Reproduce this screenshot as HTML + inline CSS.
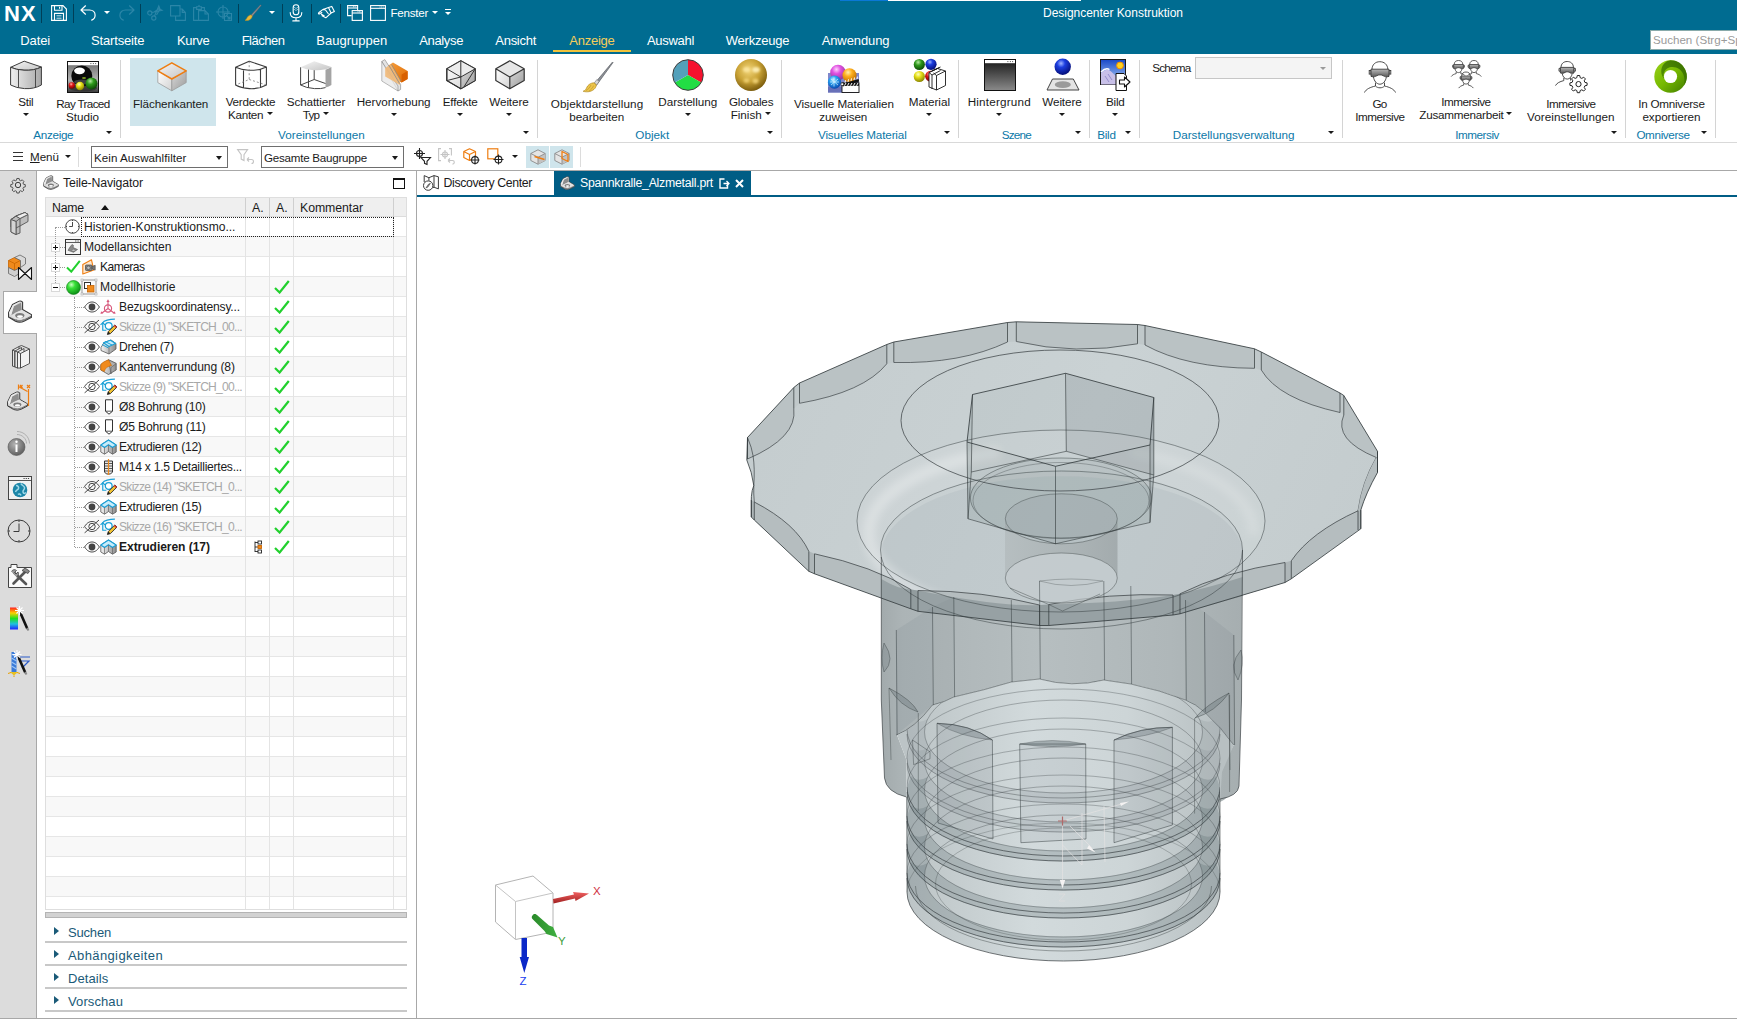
<!DOCTYPE html>
<html lang="de">
<head>
<meta charset="utf-8">
<title>NX - Designcenter Konstruktion</title>
<style>
*{box-sizing:border-box;margin:0;padding:0}
html,body{width:1737px;height:1022px;overflow:hidden;background:#fff}
body{font-family:"Liberation Sans",sans-serif;font-size:12px;color:#1a1a1a;position:relative}
svg{position:absolute;overflow:visible}
.abs{position:absolute}
#hdr{position:absolute;left:0;top:0;width:1737px;height:54px;background:#006c91}
#hdr .t{position:absolute;color:#fff;white-space:nowrap}
.qs{position:absolute;top:4px;width:1px;height:19px;background:#003f57}
.mt{position:absolute;top:33px;font-size:13px;color:#fff;white-space:nowrap;line-height:15px}
#ribbon{position:absolute;left:0;top:54px;width:1737px;height:88px;background:#fff}
#ribline{position:absolute;left:0;top:142px;width:1737px;height:1px;background:#d9d9d9}
.rl{position:absolute;font-size:11.6px;line-height:13px;text-align:center;white-space:nowrap;color:#1a1a1a;transform:translateX(-50%)}
.gl{position:absolute;top:128px;font-size:11.6px;line-height:13px;color:#0b78a8;white-space:nowrap;transform:translateX(-50%)}
.vsep{position:absolute;width:1px;background:#d4d4d4;top:60px;height:78px}
.dd{position:absolute;width:0;height:0;border-left:3px solid transparent;border-right:3px solid transparent;border-top:3.5px solid #1a1a1a}
.ddw{border-top-color:#fff}
#selbar{position:absolute;left:0;top:143px;width:1737px;height:27px;background:#fff}
#selline{position:absolute;left:0;top:170px;width:1737px;height:1px;background:#a8a8a8}
.combo{position:absolute;top:146px;height:22px;border:1px solid #6e6e6e;background:#fff;font-size:12px;line-height:20px;padding-left:2px;white-space:nowrap}
#side{position:absolute;left:0;top:171px;width:37px;height:847px;background:#dcdcdc;border-right:1px solid #a8a8a8}
#nav{position:absolute;left:37px;top:171px;width:379px;height:847px;background:#fff}
#vdiv{position:absolute;left:416px;top:171px;width:1px;height:847px;background:#a8a8a8}
#botline{position:absolute;left:0;top:1018px;width:1737px;height:1px;background:#a8a8a8}
#tabs{position:absolute;left:418px;top:171px;width:1319px;height:26px;background:#fff}
#view{position:absolute;left:418px;top:197px;width:1319px;height:821px;background:#fff}
</style>
</head>
<body>
<div id="hdr">
<div class="abs" style="left:840px;top:0;width:48px;height:1px;background:#0a78d6"></div>
<div class="abs" style="left:888px;top:0;width:193px;height:1px;background:#fff"></div>
<div class="t" style="left:4px;top:0px;font-size:22px;font-weight:bold;line-height:27px;letter-spacing:1.219px;">NX</div>
<div class="qs" style="left:41px"></div><div class="qs" style="left:73px"></div><div class="qs" style="left:140px"></div><div class="qs" style="left:238px"></div><div class="qs" style="left:282px"></div><div class="qs" style="left:311px"></div><div class="qs" style="left:340px"></div>
<svg style="left:51px;top:5px" width="16" height="16" viewBox="0 0 16 16" fill="none" stroke="#fff" stroke-width="1.1"><path d="M0.6 0.6h11.4l3.4 3.4v11.4h-14.8z"/><path d="M3.5 0.6v4.6h7.5v-4.6M8.6 1.8v2"/><path d="M3.500 15.400v-7h9v7"/><path d="M5.500 10.800h5M5.500 13.200h5" stroke-width="0.8"/></svg>
<svg style="left:80px;top:5px" width="17" height="16" viewBox="0 0 17 16" fill="none" stroke="#fff" stroke-width="1.2" stroke-linecap="round" stroke-linejoin="round"><path d="M5.5 0.8L1 5l4.5 4.2M1 5h8.5c3.4 0 5.6 2.3 5.6 5.2c0 2.200 -1.400 4.100 -3.400 4.900"/></svg>
<svg style="left:118px;top:5px" width="17" height="16" viewBox="0 0 17 16" fill="none" stroke="#2b86a8" stroke-width="1.2" stroke-linecap="round" stroke-linejoin="round"><path d="M11.5 0.8L16 5l-4.500 4.200M16 5h-8.500c-3.400 0 -5.600 2.300 -5.600 5.200c0 2.200 1.400 4.100 3.400 4.900"/></svg>
<svg style="left:147px;top:5px" width="16" height="16" viewBox="0 0 16 16" fill="none" stroke="#2b86a8" stroke-width="1.1"><circle cx="2.8" cy="8" r="2.1"/><circle cx="6.800" cy="13" r="2.100"/><path d="M4.800 7.500L15 5.200l-3 -1.500l-5.500 3.700M7.500 11l4.300 -10l1.200 3l-3.500 6"/></svg>
<svg style="left:170px;top:5px" width="16" height="16" viewBox="0 0 16 16" fill="none" stroke="#2b86a8" stroke-width="1.1"><path d="M0.600 0.600h9.400v10.400h-9.400z"/><path d="M5.600 11v4.400h9.800v-8l-3.200 -3.400h-2.200M12.200 4v3.400h3.200"/></svg>
<svg style="left:193px;top:5px" width="16" height="16" viewBox="0 0 16 16" fill="none" stroke="#2b86a8" stroke-width="1.1"><path d="M3.600 2.600h-3v12.800h5M8.400 2.600h3v3M3.600 4.400v-2.600h1.400l1 -1.200l1 1.200h1.400v2.600z"/><path d="M5.600 5.600h6.400l3.400 3.400v6.400h-9.800zM12 5.600v3.400h3.400"/></svg>
<svg style="left:216px;top:5px" width="16" height="16" viewBox="0 0 16 16" fill="none" stroke="#2b86a8" stroke-width="1.1"><circle cx="7" cy="7" r="5"/><path d="M7 0v14M0 7h14M8.500 8.500h7v7h-7zM10.500 10.500l3.500 3.500M14 11.500v2.500h-2.500"/></svg>
<svg style="left:244px;top:4px" width="18" height="18" viewBox="0 0 18 18"><path d="M16.500 0.800L6.800 11.200l1.400 1.200L17.200 1.500z" fill="#8a8e94" stroke="#5a5e64" stroke-width="0.5"/><path d="M6.600 10.900c-1.800 0.200 -3.200 1.800 -3.800 3.400c-0.400 1 -1 1.700 -1.800 2c2.400 0.700 5.400 -0.400 6.600 -2.400c0.500 -0.900 0.600 -1.700 0.500 -2.200z" fill="#e8b93a" stroke="#b98a1c" stroke-width="0.5"/></svg>
<svg style="left:289px;top:4px" width="14" height="18" viewBox="0 0 14 18" fill="none" stroke="#fff" stroke-width="1.1" stroke-linecap="round"><rect x="4.200" y="0.800" width="5.600" height="10" rx="2.800"/><path d="M1.200 8.500c0 3.300 2.500 5.300 5.800 5.300s5.800 -2 5.800 -5.300M7 13.800v3M3.800 16.900h6.400"/><path d="M5.800 3.500h0.010M8.200 3.500h0.010M5.800 5.500h0.010M8.200 5.500h0.010M7 4.500h0.010M7 6.500h0.010" stroke-width="0.9"/></svg>
<svg style="left:317px;top:6px" width="18" height="13" viewBox="0 0 18 13" fill="none" stroke="#fff" stroke-width="1.1" stroke-linejoin="round"><path d="M11.500 1.600l3.300 -1.200l2.600 5l-3.300 1.600z"/><path d="M11.500 1.600l-5.500 1.800l-4.300 3.400c-0.700 0.600 0.200 1.600 1 1l2.500 -1.600M14.100 7l-5.300 4.800l-4.200 -2.200M6 3.400l2.500 0.600l3 4M4 8l3.500 2"/></svg>
<svg style="left:347px;top:5px" width="16" height="16" viewBox="0 0 16 16" fill="none" stroke="#fff" stroke-width="1.1"><path d="M4.600 10.600h-4v-10h10v4.500"/><path d="M0.600 3h10"/><rect x="5.200" y="5.600" width="10.200" height="9.800"/><path d="M5.200 8h10.200"/><path d="M6 1.800h3M10.500 6.800h3.500" stroke-dasharray="1 0.600" stroke-width="0.8"/></svg>
<svg style="left:370px;top:5px" width="16" height="16" viewBox="0 0 16 16" fill="none" stroke="#fff" stroke-width="1.1"><rect x="0.600" y="0.600" width="14.800" height="14.800"/><path d="M0.600 3.300h14.800"/><path d="M9.500 2h4.200" stroke-dasharray="1 0.600" stroke-width="0.800"/></svg>

<div class="t" style="left:390.5px;top:6px;font-size:11.6px;line-height:14px;letter-spacing:-0.261px;">Fenster</div>
<div class="dd ddw" style="left:432px;top:11px"></div>
<div class="dd ddw" style="left:445px;top:12px"></div><div class="abs" style="left:445px;top:9px;width:6px;height:1px;background:#fff"></div>
<div class="dd ddw" style="left:104px;top:11px"></div>
<div class="dd ddw" style="left:269px;top:11px"></div>
<div class="t" style="left:1043px;top:6px;font-size:12px;line-height:14px;letter-spacing:-0.030px;">Designcenter Konstruktion</div>
<div class="mt" style="left:20.3px;font-size:13px;letter-spacing:-0.130px;">Datei</div>
<div class="mt" style="left:91px;font-size:13px;letter-spacing:-0.161px;">Startseite</div>
<div class="mt" style="left:177px;font-size:13px;letter-spacing:-0.332px;">Kurve</div>
<div class="mt" style="left:241.7px;font-size:13px;letter-spacing:-0.507px;">Flächen</div>
<div class="mt" style="left:316.3px;font-size:13px;letter-spacing:0.016px;">Baugruppen</div>
<div class="mt" style="left:419.3px;font-size:13px;letter-spacing:-0.364px;">Analyse</div>
<div class="mt" style="left:495.3px;font-size:13px;letter-spacing:-0.276px;">Ansicht</div>
<div class="mt" style="left:569.3px;font-size:13px;letter-spacing:-0.240px;;color:#f5cd5a">Anzeige</div>
<div class="mt" style="left:647px;font-size:13px;letter-spacing:-0.306px;">Auswahl</div>
<div class="mt" style="left:725.7px;font-size:13px;letter-spacing:-0.202px;">Werkzeuge</div>
<div class="mt" style="left:821.7px;font-size:13px;letter-spacing:-0.108px;">Anwendung</div>
<div class="abs" style="left:553px;top:50px;width:78px;height:2px;background:#f0c23c"></div>
<div class="abs" style="left:1650px;top:30px;width:90px;height:20px;background:#fff;border:1px solid #8aa;color:#9a9a9a;font-size:11.6px;line-height:18px;padding-left:2px;white-space:nowrap;overflow:hidden">Suchen (Strg+Sp</div>
</div>
<div id="ribbon"></div>
<div id="ribline"></div>
<div class="abs" style="left:130px;top:58px;width:86px;height:68px;background:#cfe5ec"></div>
<svg width="0" height="0" style="left:0;top:0"><defs>
<filter id="fB1" x="-50%" y="-50%" width="200%" height="200%"><feGaussianBlur stdDeviation="1.1"/></filter><filter id="fB2" x="-50%" y="-50%" width="200%" height="200%"><feGaussianBlur stdDeviation="0.7"/></filter><linearGradient id="gSide" x1="0" x2="1" y1="0" y2="0"><stop offset="0" stop-color="#f0f0f0"/><stop offset="1" stop-color="#a8a8a8"/></linearGradient>
<linearGradient id="gTop" x1="0" x2="1" y1="0" y2="1"><stop offset="0" stop-color="#f6f6f6"/><stop offset="1" stop-color="#c4c4c4"/></linearGradient>
<linearGradient id="gL" x1="0" x2="1" y1="0" y2="1"><stop offset="0" stop-color="#ffffff"/><stop offset="1" stop-color="#d2d2d2"/></linearGradient>
<linearGradient id="gR" x1="0" x2="1" y1="0" y2="1"><stop offset="0" stop-color="#d8d8d8"/><stop offset="1" stop-color="#9c9c9c"/></linearGradient>
<radialGradient id="gGold" cx="0.42" cy="0.35" r="0.65"><stop offset="0" stop-color="#f3d67a"/><stop offset="0.55" stop-color="#c9a235"/><stop offset="1" stop-color="#7d5e0e"/></radialGradient>
<radialGradient id="gBlue" cx="0.4" cy="0.3" r="0.7"><stop offset="0" stop-color="#9fb4ff"/><stop offset="0.35" stop-color="#1c3ee0"/><stop offset="1" stop-color="#050f7a"/></radialGradient>
<radialGradient id="gGreen" cx="0.4" cy="0.3" r="0.7"><stop offset="0" stop-color="#b4e8a0"/><stop offset="0.4" stop-color="#2f9a1c"/><stop offset="1" stop-color="#0d4a06"/></radialGradient>
<radialGradient id="gYel" cx="0.4" cy="0.3" r="0.7"><stop offset="0" stop-color="#ffffc0"/><stop offset="0.4" stop-color="#e6e018"/><stop offset="1" stop-color="#8a8400"/></radialGradient>
<radialGradient id="gRed" cx="0.4" cy="0.3" r="0.7"><stop offset="0" stop-color="#ffb0a8"/><stop offset="0.4" stop-color="#e01818"/><stop offset="1" stop-color="#700"/></radialGradient>
<radialGradient id="gMag" cx="0.4" cy="0.3" r="0.7"><stop offset="0" stop-color="#ffd0ff"/><stop offset="0.4" stop-color="#e050e0"/><stop offset="1" stop-color="#903a98"/></radialGradient>
<radialGradient id="gOra" cx="0.4" cy="0.3" r="0.7"><stop offset="0" stop-color="#fff0b0"/><stop offset="0.4" stop-color="#ffb020"/><stop offset="1" stop-color="#c07000"/></radialGradient>
<radialGradient id="gCy" cx="0.4" cy="0.3" r="0.7"><stop offset="0" stop-color="#c0f0ff"/><stop offset="0.4" stop-color="#28a0f0"/><stop offset="1" stop-color="#0a4ab0"/></radialGradient>
<linearGradient id="gBlk" x1="0" x2="0" y1="0" y2="1"><stop offset="0" stop-color="#161616"/><stop offset="1" stop-color="#8a8a8a"/></linearGradient>
<linearGradient id="gRay" x1="0" x2="0" y1="0" y2="1"><stop offset="0" stop-color="#6a6a6a"/><stop offset="0.6" stop-color="#b4b4b4"/><stop offset="1" stop-color="#3a3a3a"/></linearGradient>
<linearGradient id="gVr" x1="0" x2="0" y1="0" y2="1"><stop offset="0" stop-color="#b8b8b8"/><stop offset="1" stop-color="#5a5a5a"/></linearGradient>
<linearGradient id="gOmni" x1="0" x2="1" y1="0" y2="1"><stop offset="0" stop-color="#9ad21a"/><stop offset="0.5" stop-color="#76b900"/><stop offset="1" stop-color="#3f7a00"/></linearGradient>
<linearGradient id="gOmni2" x1="0" x2="1" y1="1" y2="0"><stop offset="0" stop-color="#4e8c00"/><stop offset="1" stop-color="#2f6400"/></linearGradient>
<linearGradient id="gOr" x1="0" x2="1" y1="0" y2="1"><stop offset="0" stop-color="#f6a040"/><stop offset="1" stop-color="#e06a00"/></linearGradient>
<linearGradient id="gSky" x1="0" x2="0" y1="0" y2="1"><stop offset="0" stop-color="#1848c8"/><stop offset="1" stop-color="#b8d8f8"/></linearGradient>
</defs></svg>
<!-- Stil -->
<svg style="left:10px;top:60px" width="32" height="30" viewBox="0 0 32 30"><path d="M0.600 7.300L14.200 1.200L31.400 7Q24 10.800 14 10.200Q6 9.800 0.600 7.300z" fill="url(#gTop)" stroke="#3c3c3c" stroke-width="1" stroke-linejoin="round"/><path d="M0.600 7.300Q6 9.800 14 10.200Q24 10.800 31.400 7V25Q24 29.200 14.500 28.600Q6 28 0.600 25z" fill="url(#gSide)" stroke="#3c3c3c" stroke-width="1" stroke-linejoin="round"/><path d="M8.500 9.600V27.400M25.500 9.800V27.600" stroke="#3c3c3c" stroke-width="0.9" fill="none"/></svg>
<!-- Ray traced -->
<svg style="left:67px;top:61px" width="32" height="32" viewBox="0 0 32 32"><rect x="0.500" y="0.500" width="31" height="31" fill="url(#gRay)" stroke="#111" stroke-width="1"/><rect x="1" y="1" width="30" height="3.200" fill="#fff"/><path d="M23.500 2.600h0.800M25.900 2.600h0.800M28.300 2.600h0.800" stroke="#111" stroke-width="0.9"/><ellipse cx="16" cy="27" rx="14" ry="3.500" fill="#2a2a2a" opacity="0.7"/><circle cx="14.800" cy="15" r="10.500" fill="#0a0a0a"/><ellipse cx="12.500" cy="9.800" rx="5.400" ry="3.400" fill="#fff" filter="url(#fB2)"/><ellipse cx="11" cy="9.500" rx="3" ry="2" fill="#fff"/><ellipse cx="15" cy="21" rx="8" ry="2.500" fill="#555" opacity="0.7"/><circle cx="24.500" cy="22.500" r="6" fill="url(#gGreen)"/><circle cx="13" cy="25" r="4.200" fill="url(#gYel)"/><circle cx="4.800" cy="24.500" r="3.200" fill="url(#gRed)"/><ellipse cx="17" cy="17" rx="2" ry="1" fill="#7a9a20"/></svg>
<!-- Flaechenkanten -->
<svg style="left:157px;top:62px" width="30" height="30" viewBox="0 0 30 30"><path d="M0.800 8.800L14.800 17V28.800L0.800 20.600z" fill="url(#gL)" stroke="#9a9a9a" stroke-width="0.8"/><path d="M29.200 8.800L14.800 17V28.800L29.200 20.600z" fill="url(#gR)" stroke="#9a9a9a" stroke-width="0.800"/><path d="M14.800 0.800L29.200 8.800L14.800 17L0.800 8.800z" fill="url(#gTop)" stroke="#ee7d11" stroke-width="1.500" stroke-linejoin="round"/></svg>
<!-- Verdeckte Kanten -->
<svg style="left:235px;top:60px" width="32" height="30" viewBox="0 0 32 30" fill="none" stroke="#3c3c3c" stroke-linejoin="round"><path d="M0.600 7.300L14.200 1.200L31.400 7Q24 10.800 14 10.200Q6 9.800 0.600 7.300zM0.600 7.300V25Q6 28 14.500 28.600Q24 29.200 31.400 25V7M8.500 9.600V27.400M25.500 9.800V27.600" stroke-width="1.100"/><path d="M14.200 1.200V19.500L0.600 25M14.200 19.500L31.400 25" stroke-width="0.8" stroke-dasharray="2 2" stroke="#7a7a7a"/></svg>
<!-- Schattierter Typ -->
<svg style="left:300px;top:60px" width="32" height="30" viewBox="0 0 32 30" stroke-linejoin="round"><path d="M0.600 7.300L14.200 1.200L31.400 7Q24 10.800 14 10.200Q6 9.800 0.600 7.300z" fill="url(#gTop)" stroke="none"/><path d="M25.500 9.800Q29 8.600 31.400 7V25Q29 26.600 25.500 27.600z" fill="#a4a4a4"/><path d="M0.600 7.300V25Q6 28 14.500 28.600Q21 29 25.500 27.600M8.500 9.600V27.400M14.200 10.200V19.500L0.600 25M14.200 19.500L25.500 23.500" fill="none" stroke="#444" stroke-width="1"/></svg>
<!-- Hervorhebung -->
<svg style="left:381px;top:58px" width="28" height="33" viewBox="0 0 28 33"><path d="M6 8.500l6 -4l14.600 8.500v8l-6 3.500l-14.600 -8.500z" fill="url(#gOr)"/><path d="M20.600 16.500l6 -3.500v8l-6 3.500z" fill="#d86000"/><path d="M0.800 3.500L3.800 1.600L19.600 26.500V31.500L17 33z" fill="#e0e0e0" stroke="#8a8a8a" stroke-width="0.8" opacity="0.85"/><path d="M0.800 3.500V23L17 33V28z" fill="#e8e8e8" stroke="#8a8a8a" stroke-width="0.800" opacity="0.75"/><path d="M4.200 10L10 6.500L19 21.500V27L4.200 18.500z" fill="#f0b878" opacity="0.9"/><path d="M8 7.500L18.500 25.500M10.500 6.500L20 23" stroke="#8a8a8a" stroke-width="0.800" fill="none"/></svg>
<!-- Effekte -->
<svg style="left:446px;top:60px" width="30" height="30" viewBox="0 0 30 30" stroke-linejoin="round"><path d="M14.800 0.800L29.200 8.800V20.600L14.800 28.800L0.800 20.600V8.800z" fill="url(#gL)" stroke="#333" stroke-width="1.200"/><path d="M14.800 17L29.200 8.800V20.600L14.800 28.800z" fill="url(#gR)"/><path d="M14.800 0.800L29.200 8.800L14.800 17L0.800 8.800z" fill="#ececec"/><path d="M14.800 0.800L29.200 8.800V20.600L14.800 28.800L0.800 20.600V8.800zM0.800 8.800L14.800 17L29.200 8.800M14.800 17V28.800M14.800 0.800V17M0.800 20.600L14.800 17M29.200 8.800L18 26.800" fill="none" stroke="#333" stroke-width="1"/></svg>
<!-- Weitere -->
<svg style="left:495px;top:60px" width="30" height="30" viewBox="0 0 30 30" stroke-linejoin="round"><path d="M0.800 8.800L14.800 17V28.800L0.800 20.600z" fill="url(#gL)"/><path d="M29.200 8.800L14.800 17V28.800L29.200 20.600z" fill="url(#gR)"/><path d="M14.800 0.800L29.200 8.800L14.800 17L0.800 8.800z" fill="#e6e6e6"/><path d="M14.800 0.800L29.200 8.800V20.600L14.800 28.800L0.800 20.600V8.800zM0.800 8.800L14.800 17L29.200 8.800M14.800 17V28.800" fill="none" stroke="#333" stroke-width="1.200"/></svg>
<!-- Objektdarstellung brush -->
<svg style="left:582px;top:61px" width="32" height="32" viewBox="0 0 32 32"><path d="M30.500 1L12.500 22.500L14.500 24.200L31 1.600z" fill="#8e9298" stroke="#4a4e54" stroke-width="0.6"/><path d="M14.800 18.500l2.400 2l-2.600 3.600l-2.400 -2z" fill="#d6d6d6" stroke="#6a6a6a" stroke-width="0.5"/><path d="M12 21.800c-3.500 0 -6.500 2.400 -7.500 5.200c-0.600 1.700 -1.800 2.800 -3.400 3.200c4 1.600 9.600 0.200 12 -3c1.100 -1.500 1.400 -2.900 1 -3.700z" fill="#ecc44a" stroke="#a8821c" stroke-width="0.600"/><path d="M4 29.500c2 -1 4 -3 5 -5.500M7 30c2 -1.200 3.600 -3 4.600 -5.400" stroke="#b8902a" stroke-width="0.600" fill="none"/></svg>
<!-- Darstellung pie -->
<svg style="left:672px;top:59px" width="32" height="32" viewBox="0 0 32 32"><path d="M16 16V0.800A15.200 15.200 0 0 1 29.160 23.600z" fill="#f5122e"/><path d="M16 16L29.160 23.600A15.200 15.200 0 0 1 2.840 23.600z" fill="#22dd44"/><path d="M16 16L2.840 23.600A15.200 15.200 0 0 1 16 0.800z" fill="#54a0ba"/><circle cx="16" cy="16" r="15.300" fill="none" stroke="#3a3a3a" stroke-width="1"/></svg>
<!-- Globales Finish -->
<svg style="left:735px;top:59px" width="32" height="32" viewBox="0 0 32 32"><circle cx="16" cy="16" r="16" fill="url(#gGold)"/><g filter="url(#fB1)"><ellipse cx="11.500" cy="10.500" rx="3.400" ry="2.600" fill="#fbe6a0" opacity="0.9"/><ellipse cx="21" cy="10.800" rx="3.800" ry="2.800" fill="#fdeeb4" opacity="0.95"/><ellipse cx="11.500" cy="21.500" rx="2.800" ry="2.200" fill="#f3d67a" opacity="0.8"/><ellipse cx="20.500" cy="22" rx="3" ry="2.400" fill="#f3d67a" opacity="0.85"/></g></svg>
<!-- Visuelle Materialien -->
<svg style="left:827px;top:63px" width="34" height="31" viewBox="0 0 34 31"><rect x="1" y="10" width="31" height="19.500" fill="#8088cc"/><rect x="1" y="24" width="31" height="5.500" fill="#6870b8"/><circle cx="11" cy="9.500" r="7.800" fill="url(#gMag)"/><circle cx="22.500" cy="12.200" r="7" fill="url(#gOra)"/><circle cx="7.500" cy="19.200" r="6.600" fill="url(#gCy)"/><path d="M7 14.500v9M3 19h9M4 16l7 6M11 16l-7 6" stroke="#d8f4ff" stroke-width="0.7"/><rect x="15" y="19.800" width="17" height="9.700" fill="#fff" stroke="#111" stroke-width="0.9"/><path d="M15 21l16.500 -5l0.800 2.600l-16.500 5z" fill="#111"/><path d="M15 19.800h17v3h-17z" fill="#111"/><path d="M17.500 22.600l1.500 -2.600M20.500 22.600l1.500 -2.600M23.500 22.600l1.500 -2.600M26.500 22.600l1.500 -2.600M29.500 22.600l1.500 -2.600M18 19.800l0.500 -2.600M21 18.900l0.500 -2.600M24 18l0.500 -2.600M27 17.100l0.500 -2.600M30 16.200l0.500 -2.600" stroke="#fff" stroke-width="1"/><circle cx="15.200" cy="21.200" r="1.400" fill="#fff" stroke="#111" stroke-width="0.600"/></svg>
<!-- Material -->
<svg style="left:913px;top:58px" width="34" height="33" viewBox="0 0 34 33"><circle cx="6.300" cy="6.500" r="5.600" fill="url(#gGreen)"/><circle cx="18" cy="6.300" r="5.600" fill="url(#gBlue)"/><circle cx="6.300" cy="18.500" r="5.600" fill="url(#gYel)"/><circle cx="17.500" cy="18.200" r="5.400" fill="url(#gRed)"/><path d="M16 14.500L24.500 10.500L32.500 13V27.500L23.500 32L16 29z" fill="#fff" stroke="#1a1a1a" stroke-width="0.9" stroke-linejoin="round"/><path d="M16 14.500L19 17V31M19 17L27.500 12.500M20.500 15L23.500 17.500V32M23.500 17.500L32.500 13M17.500 13.800L26 9.800M19 12.800L27.500 9" fill="none" stroke="#1a1a1a" stroke-width="0.900" stroke-linejoin="round"/></svg>
<!-- Hintergrund -->
<svg style="left:984px;top:59px" width="32" height="32" viewBox="0 0 32 32"><rect x="0.500" y="0.500" width="31" height="31" fill="url(#gBlk)" stroke="#111" stroke-width="1"/><rect x="1" y="1" width="30" height="3.200" fill="#fff"/><path d="M23.500 2.600h0.800M25.900 2.600h0.800M28.300 2.600h0.800" stroke="#111" stroke-width="0.900"/></svg>
<!-- Weitere Szene -->
<svg style="left:1046px;top:58px" width="34" height="33" viewBox="0 0 34 33"><circle cx="16.700" cy="8.700" r="8.200" fill="url(#gBlue)"/><path d="M6.500 21h20.800L33 32H1z" fill="#e4e4e4" stroke="#444" stroke-width="1"/><ellipse cx="16.800" cy="26.700" rx="8" ry="3.400" fill="#9a9a9a"/></svg>
<!-- Bild -->
<svg style="left:1100px;top:59px" width="32" height="32" viewBox="0 0 32 32"><rect x="0.500" y="0.500" width="25" height="25" fill="url(#gSky)" stroke="#1a1a1a" stroke-width="1"/><path d="M1 14c3 -3 6 -4 8 -3c3 1.500 5 5 7 6v8.500h-15z" fill="#c8c0e8"/><path d="M1 13c3 -3 6 -4 8.500 -2.500" fill="none" stroke="#fff" stroke-width="1.300"/><path d="M5 17l4 6M8 15l4 6" stroke="#9088c8" stroke-width="0.9"/><circle cx="20" cy="6.500" r="3.400" fill="#ffd21e" stroke="#f08c00" stroke-width="1"/><path d="M16 14.500h8l2.500 2.500v14.500h-10.500z" fill="#fff" stroke="#111" stroke-width="1"/><path d="M19.500 21h5v-3l5.500 5l-5.500 5v-3h-5z" fill="#fff" stroke="#111" stroke-width="1.100" stroke-linejoin="round"/></svg>
<!-- Go Immersive -->
<svg style="left:1364px;top:61px" width="32" height="32" viewBox="0 0 32 32" fill="none" stroke="#3a3a3a" stroke-width="0.9"><path d="M8 8.500c0 -5 3.500 -7.800 7.800 -7.800s8 2.800 8 7.800"/><path d="M9.500 16c0.500 4 3.300 7.200 6.400 7.200s5.900 -3.200 6.400 -7.200"/><path d="M11.500 21.500v3.500c-5 1.200 -9.500 3 -11 6.500M20.500 21.500v3.500c5 1.200 9.500 3 11 6.500M11.500 25c2 2.400 7 2.400 9 0"/><rect x="5.200" y="9.500" width="1.800" height="3.600" fill="#ddd"/><rect x="25" y="9.500" width="1.800" height="3.600" fill="#ddd"/><path d="M7 8.200h18v7.200c-2.500 0.800 -4.500 0.200 -6 -0.800c-1.800 -1 -4.200 -1 -6 0c-1.500 1 -3.500 1.600 -6 0.800z" fill="url(#gVr)"/></svg>
<!-- Immersive Zusammenarbeit -->
<svg style="left:1451px;top:60px" width="32" height="30" viewBox="0 0 32 30" fill="none" stroke="#3a3a3a" stroke-width="0.8"><g id="vrp"><path d="M3.200 4.500c0 -2.800 2 -4 4.300 -4s4.300 1.200 4.300 4"/><path d="M4 8.800c0.300 2.200 1.800 3.800 3.500 3.800s3.200 -1.600 3.500 -3.800"/><path d="M5.200 11.800v1.800c-2.400 0.600 -4 1.400 -5 3M9.800 11.800v1.800c2.400 0.600 4 1.400 5 3"/><path d="M2.600 4.500h9.800v4c-1.300 0.400 -2.400 0.100 -3.200 -0.400c-1 -0.600 -2.400 -0.600 -3.400 0c-0.800 0.500 -1.900 0.800 -3.200 0.400z" fill="url(#gVr)"/><path d="M1.600 5.300h1v2h-1zM12.400 5.300h1v2h-1z" fill="#ddd"/></g><use href="#vrp" x="15.500" y="0"/><g transform="translate(7.500,11.500)"><path d="M1.500 4h12v9h-12z" fill="#fff" stroke="none"/><use href="#vrp"/></g></svg>
<!-- Immersive Voreinstellungen -->
<svg style="left:1555px;top:61px" width="33" height="32" viewBox="0 0 33 32" fill="none" stroke="#3a3a3a" stroke-width="0.9"><path d="M6 6.500c0 -4 2.800 -6 6.200 -6s6.200 2 6.200 6"/><path d="M7.200 12.500c0.400 3.200 2.600 5.600 5 5.600s4.600 -2.400 5 -5.600"/><path d="M8.800 16.800v2.800c-4 1 -7 2.400 -8.300 5M15.600 16.800v2.800"/><path d="M5.400 6.400h13.600v5.600c-1.900 0.600 -3.400 0.200 -4.600 -0.600c-1.300 -0.800 -3.100 -0.800 -4.400 0c-1.200 0.800 -2.700 1.200 -4.600 0.600z" fill="url(#gVr)"/><path d="M4 7.400h1.400v2.800h-1.400zM19 7.400h1.400v2.800h-1.400z" fill="#ddd"/><circle cx="23.500" cy="23" r="6.800" fill="#fff" stroke="none"/><path d="M22.300 14.500h2.400l0.500 2.200l1.600 0.700l1.900 -1.200l1.700 1.700l-1.200 1.900l0.700 1.600l2.200 0.500v2.400l-2.200 0.500l-0.700 1.600l1.200 1.900l-1.700 1.700l-1.900 -1.200l-1.600 0.700l-0.500 2.200h-2.400l-0.500 -2.200l-1.600 -0.700l-1.900 1.200l-1.700 -1.700l1.200 -1.900l-0.700 -1.600l-2.200 -0.500v-2.400l2.200 -0.500l0.700 -1.600l-1.200 -1.900l1.700 -1.700l1.900 1.200l1.600 -0.700z" fill="#fff" stroke="#222" stroke-width="1"/><circle cx="23.500" cy="23.100" r="2.600" fill="#fff" stroke="#222" stroke-width="1"/></svg>
<!-- Omniverse -->
<svg style="left:1654px;top:60px" width="33" height="33" viewBox="0 0 33 33"><circle cx="16.500" cy="16.500" r="16.200" fill="url(#gOmni)"/><path d="M16.500 0.300a16.200 16.200 0 0 1 13 26c2 -6 1 -13 -4 -17c-4 -3 -9 -3 -12 -1c-4 2.500 -5 7.500 -3 11c-4 -4 -4.500 -11 -0.500 -15.500c1.800 -2 4 -3.200 6.500 -3.500z" fill="url(#gOmni2)" opacity="0.85"/><circle cx="16.500" cy="16.500" r="6.600" fill="#fff"/></svg>

<div class="dd" style="left:23px;top:113px"></div>

<div class="dd" style="left:106px;top:131px"></div>
<div class="vsep" style="left:120px"></div>

<div class="dd" style="left:267px;top:112px"></div>
<div class="dd" style="left:323px;top:112px"></div>
<div class="dd" style="left:391px;top:113px"></div>
<div class="dd" style="left:457px;top:113px"></div>
<div class="dd" style="left:506px;top:113px"></div>
<div class="dd" style="left:523px;top:131px"></div>
<div class="vsep" style="left:537px"></div>

<div class="dd" style="left:685px;top:113px"></div>
<div class="dd" style="left:765px;top:112px"></div>
<div class="dd" style="left:767px;top:131px"></div>
<div class="vsep" style="left:781px"></div>

<div class="dd" style="left:926px;top:113px"></div>
<div class="dd" style="left:944px;top:131px"></div>
<div class="vsep" style="left:958px"></div>
<div class="dd" style="left:996px;top:113px"></div>
<div class="dd" style="left:1059px;top:113px"></div>
<div class="dd" style="left:1075px;top:131px"></div>
<div class="vsep" style="left:1089px"></div>
<div class="dd" style="left:1112px;top:113px"></div>
<div class="dd" style="left:1125px;top:131px"></div>
<div class="vsep" style="left:1139px"></div>

<div class="abs" style="left:1195px;top:57px;width:137px;height:22px;border:1px solid #c6c6c6;background:#f4f4f4"></div>
<div class="dd" style="left:1320px;top:67px;border-top-color:#9a9a9a"></div>
<div class="dd" style="left:1328px;top:131px"></div>
<div class="vsep" style="left:1342px"></div>

<div class="dd" style="left:1506px;top:112px"></div>

<div class="dd" style="left:1611px;top:131px"></div>
<div class="vsep" style="left:1625px"></div>

<div class="dd" style="left:1701px;top:131px"></div>
<div class="vsep" style="left:1715px"></div>
<div class="abs" style="left:18.3px;top:95px;font-size:11.7px;line-height:14px;white-space:nowrap;letter-spacing:-0.313px;">Stil</div>
<div class="abs" style="left:56.3px;top:97px;font-size:11.7px;line-height:14px;white-space:nowrap;letter-spacing:-0.653px;">Ray Traced</div>
<div class="abs" style="left:66px;top:110px;font-size:11.7px;line-height:14px;white-space:nowrap;letter-spacing:-0.029px;">Studio</div>
<div class="abs" style="left:133px;top:97px;font-size:11.7px;line-height:14px;white-space:nowrap;letter-spacing:-0.112px;">Flächenkanten</div>
<div class="abs" style="left:225.7px;top:95px;font-size:11.7px;line-height:14px;white-space:nowrap;letter-spacing:-0.259px;">Verdeckte</div>
<div class="abs" style="left:228px;top:108px;font-size:11.7px;line-height:14px;white-space:nowrap;letter-spacing:-0.297px;">Kanten</div>
<div class="abs" style="left:286.7px;top:95px;font-size:11.7px;line-height:14px;white-space:nowrap;letter-spacing:-0.094px;">Schattierter</div>
<div class="abs" style="left:302.7px;top:108px;font-size:11.7px;line-height:14px;white-space:nowrap;letter-spacing:-0.720px;">Typ</div>
<div class="abs" style="left:356.7px;top:95px;font-size:11.7px;line-height:14px;white-space:nowrap;letter-spacing:-0.013px;">Hervorhebung</div>
<div class="abs" style="left:442.7px;top:95px;font-size:11.7px;line-height:14px;white-space:nowrap;letter-spacing:-0.173px;">Effekte</div>
<div class="abs" style="left:489.3px;top:95px;font-size:11.7px;line-height:14px;white-space:nowrap;letter-spacing:-0.114px;">Weitere</div>
<div class="abs" style="left:550.7px;top:97px;font-size:11.7px;line-height:14px;white-space:nowrap;letter-spacing:0.097px;">Objektdarstellung</div>
<div class="abs" style="left:569.3px;top:110px;font-size:11.7px;line-height:14px;white-space:nowrap;letter-spacing:-0.030px;">bearbeiten</div>
<div class="abs" style="left:658.3px;top:95px;font-size:11.7px;line-height:14px;white-space:nowrap;letter-spacing:-0.017px;">Darstellung</div>
<div class="abs" style="left:729px;top:95px;font-size:11.7px;line-height:14px;white-space:nowrap;letter-spacing:-0.235px;">Globales</div>
<div class="abs" style="left:730.7px;top:108px;font-size:11.7px;line-height:14px;white-space:nowrap;letter-spacing:-0.035px;">Finish</div>
<div class="abs" style="left:794px;top:97px;font-size:11.7px;line-height:14px;white-space:nowrap;letter-spacing:-0.062px;">Visuelle Materialien</div>
<div class="abs" style="left:819.3px;top:110px;font-size:11.7px;line-height:14px;white-space:nowrap;letter-spacing:-0.097px;">zuweisen</div>
<div class="abs" style="left:908.7px;top:95px;font-size:11.7px;line-height:14px;white-space:nowrap;letter-spacing:-0.039px;">Material</div>
<div class="abs" style="left:967.7px;top:95px;font-size:11.7px;line-height:14px;white-space:nowrap;letter-spacing:0.197px;">Hintergrund</div>
<div class="abs" style="left:1042.3px;top:95px;font-size:11.7px;line-height:14px;white-space:nowrap;letter-spacing:-0.114px;">Weitere</div>
<div class="abs" style="left:1106px;top:95px;font-size:11.7px;line-height:14px;white-space:nowrap;letter-spacing:-0.253px;">Bild</div>
<div class="abs" style="left:1152.2px;top:61px;font-size:11.7px;line-height:14px;white-space:nowrap;letter-spacing:-0.787px;">Schema</div>
<div class="abs" style="left:1372.4px;top:97px;font-size:11.7px;line-height:14px;white-space:nowrap;letter-spacing:-0.804px;">Go</div>
<div class="abs" style="left:1355.3px;top:110px;font-size:11.7px;line-height:14px;white-space:nowrap;letter-spacing:-0.528px;">Immersive</div>
<div class="abs" style="left:1441.2px;top:95px;font-size:11.7px;line-height:14px;white-space:nowrap;letter-spacing:-0.495px;">Immersive</div>
<div class="abs" style="left:1419.3px;top:108px;font-size:11.7px;line-height:14px;white-space:nowrap;letter-spacing:-0.249px;">Zusammenarbeit</div>
<div class="abs" style="left:1546.3px;top:97px;font-size:11.7px;line-height:14px;white-space:nowrap;letter-spacing:-0.528px;">Immersive</div>
<div class="abs" style="left:1527px;top:110px;font-size:11.7px;line-height:14px;white-space:nowrap;letter-spacing:0.080px;">Voreinstellungen</div>
<div class="abs" style="left:1638.2px;top:97px;font-size:11.7px;line-height:14px;white-space:nowrap;letter-spacing:-0.248px;">In Omniverse</div>
<div class="abs" style="left:1642.4px;top:110px;font-size:11.7px;line-height:14px;white-space:nowrap;letter-spacing:-0.031px;">exportieren</div>
<div class="abs" style="left:33.3px;top:128px;font-size:11.7px;line-height:14px;white-space:nowrap;color:#0b78a8;letter-spacing:-0.326px;">Anzeige</div>
<div class="abs" style="left:278px;top:128px;font-size:11.7px;line-height:14px;white-space:nowrap;color:#0b78a8;letter-spacing:0.030px;">Voreinstellungen</div>
<div class="abs" style="left:635.3px;top:128px;font-size:11.7px;line-height:14px;white-space:nowrap;color:#0b78a8;letter-spacing:0.031px;">Objekt</div>
<div class="abs" style="left:818px;top:128px;font-size:11.7px;line-height:14px;white-space:nowrap;color:#0b78a8;letter-spacing:-0.154px;">Visuelles Material</div>
<div class="abs" style="left:1001.7px;top:128px;font-size:11.7px;line-height:14px;white-space:nowrap;color:#0b78a8;letter-spacing:-0.775px;">Szene</div>
<div class="abs" style="left:1097.3px;top:128px;font-size:11.7px;line-height:14px;white-space:nowrap;color:#0b78a8;letter-spacing:-0.303px;">Bild</div>
<div class="abs" style="left:1172.7px;top:128px;font-size:11.7px;line-height:14px;white-space:nowrap;color:#0b78a8;letter-spacing:0.018px;">Darstellungsverwaltung</div>
<div class="abs" style="left:1455.2px;top:128px;font-size:11.7px;line-height:14px;white-space:nowrap;color:#0b78a8;letter-spacing:-0.456px;">Immersiv</div>
<div class="abs" style="left:1636.4px;top:128px;font-size:11.7px;line-height:14px;white-space:nowrap;color:#0b78a8;letter-spacing:-0.363px;">Omniverse</div>
<div id="selbar"></div>
<div id="selline"></div>
<div class="abs" style="left:13px;top:152px;width:10px;height:1px;background:#333;box-shadow:0 4px 0 #333,0 8px 0 #333"></div>
<div class="abs" style="left:30px;top:150px;font-size:11.6px;line-height:14px"><u>M</u>enü</div><div class="dd" style="left:65px;top:155px"></div>
<div class="abs" style="left:78px;top:147px;width:1px;height:20px;background:#dcdcdc"></div>
<div class="combo" style="left:91px;width:137px"><div style="font-size:11.6px;position:relative;top:0.5px;letter-spacing:0.052px;">Kein Auswahlfilter</div></div><div class="dd" style="left:216px;top:156px;border-left-width:3.5px;border-right-width:3.5px;border-top-width:4px"></div>
<div class="combo" style="left:261px;width:143px"><div style="font-size:11.6px;position:relative;top:0.5px;letter-spacing:-0.238px;">Gesamte Baugruppe</div></div><div class="dd" style="left:392px;top:156px;border-left-width:3.5px;border-right-width:3.5px;border-top-width:4px"></div>
<div class="abs" style="left:526px;top:146px;width:23px;height:22px;background:#cfe5ec"></div>
<div class="abs" style="left:550px;top:146px;width:23px;height:22px;background:#cfe5ec"></div>
<div class="dd" style="left:512px;top:155px"></div>
<div class="abs" style="left:580px;top:147px;width:1px;height:20px;background:#dcdcdc"></div>
<svg style="left:237px;top:149px" width="16" height="15" viewBox="0 0 16 15" fill="none" stroke="#c4c4c4" stroke-width="1.100"><path d="M0.600 0.600h10l-3.600 5v6l-2.800 -1.500v-4.500z"/><path d="M10 10.500h4.500a2 2 0 0 1 0 4M10 10.500l2 -2M10 10.500l2 2"/></svg>
<svg style="left:414px;top:148px" width="17" height="17" viewBox="0 0 17 17" fill="none" stroke="#222" stroke-width="1.100"><circle cx="5.500" cy="5.500" r="3"/><path d="M5.500 0v11M0 5.500h11"/><path d="M7 9.500h9.500l-3.500 3.800v3.200l-2.500 -1.200v-2z" fill="#fff"/></svg>
<svg style="left:438px;top:148px" width="17" height="17" viewBox="0 0 17 17" fill="none" stroke="#c4c4c4" stroke-width="1.100"><path d="M3 0.600h-2.400v12h2.400M11 0.600h2.400v7"/><circle cx="7" cy="6.500" r="2.500"/><path d="M7 2v9M2.500 6.500h9"/><path d="M10 12.500h4.500a1.800 1.800 0 0 1 0 3.600M10 12.500l2 -2M10 12.500l2 2"/></svg>
<svg style="left:463px;top:148px" width="17" height="17" viewBox="0 0 17 17" fill="none" stroke-width="1.200"><path d="M0.800 3.500L6.500 0.800L12.500 3.500V9.500L6.500 12.500L0.800 9.500zM0.800 3.500L6.500 6.500L12.500 3.500M6.500 6.500V12.500" stroke="#ee7d11" stroke-linejoin="round"/><circle cx="12" cy="12" r="3.400" stroke="#222" fill="#fff" stroke-width="1.100"/><path d="M12 7.500v9M7.500 12h9" stroke="#222" stroke-width="1.100"/></svg>
<svg style="left:487px;top:148px" width="17" height="17" viewBox="0 0 17 17" fill="none" stroke-width="1.200"><rect x="0.800" y="0.800" width="10" height="10" stroke="#ee7d11"/><circle cx="11.500" cy="11.500" r="3.400" stroke="#222" fill="#fff" stroke-width="1.100"/><path d="M11.500 6.500v10M6.500 11.500h10" stroke="#222" stroke-width="1.100"/></svg>
<svg style="left:530px;top:149px" width="16" height="16" viewBox="0 0 16 16" stroke-linejoin="round"><path d="M0.800 4.500L8 0.800L15.200 4.500V11.500L8 15.200L0.800 11.500z" fill="#e4e4e4" stroke="#8a8a8a" stroke-width="0.900"/><path d="M8 8.200L15.200 4.500V11.500L8 15.200z" fill="#c2c2c2"/><path d="M0.800 4.500L8 8.200L15.200 4.500M8 8.200V15.200" fill="none" stroke="#8a8a8a" stroke-width="0.900"/><path d="M4.500 7.500L14.500 10.500" stroke="#ee7d11" stroke-width="1.500"/></svg>
<svg style="left:554px;top:149px" width="16" height="16" viewBox="0 0 16 16" stroke-linejoin="round"><path d="M0.800 4.500L8 0.800L15.200 4.500V11.500L8 15.200L0.800 11.500z" fill="#e4e4e4" stroke="#8a8a8a" stroke-width="0.900"/><path d="M8 8.200L15.200 4.500V11.500L8 15.200z" fill="#c2c2c2"/><path d="M0.800 4.500L8 8.200L15.200 4.500M8 8.200V15.200" fill="none" stroke="#8a8a8a" stroke-width="0.900"/><path d="M8 2.500L14 5.500V12.500L8 9.500z" fill="none" stroke="#ee7d11" stroke-width="1.300"/></svg>

<div id="side"></div>
<div id="nav"></div>
<div id="vdiv"></div>
<svg width="0" height="0" style="left:0;top:0"><defs>
<radialGradient id="gBall" cx="0.35" cy="0.3" r="0.75"><stop offset="0" stop-color="#c8ffc0"/><stop offset="0.35" stop-color="#38e038"/><stop offset="1" stop-color="#0a8a14"/></radialGradient>
<linearGradient id="gExt" x1="0" x2="1" y1="0" y2="0"><stop offset="0" stop-color="#f4f4f4"/><stop offset="1" stop-color="#8c8c8c"/></linearGradient>
<symbol id="iEye" viewBox="0 0 16 12"><path d="M0.600 6C3 2.200 5.500 1 8 1s5 1.200 7.400 5c-2.400 3.800 -4.900 5 -7.400 5s-5 -1.200 -7.400 -5z" fill="#fff" stroke="#444" stroke-width="1"/><circle cx="8" cy="6" r="3.400" fill="#444"/></symbol>
<symbol id="iEyeX" viewBox="0 0 16 14"><path d="M0.600 7C3 3.200 5.500 2 8 2s5 1.200 7.400 5c-2.400 3.800 -4.900 5 -7.400 5s-5 -1.200 -7.400 -5z" fill="none" stroke="#444" stroke-width="1"/><circle cx="8" cy="7" r="3.200" fill="none" stroke="#444" stroke-width="1"/><path d="M0.500 13.500L15 0.500" stroke="#444" stroke-width="1"/></symbol>
<symbol id="iChk" viewBox="0 0 16 14"><path d="M1 8L5.600 12.500L14.800 1" fill="none" stroke="#22d02e" stroke-width="2.200"/></symbol>
<symbol id="iSk" viewBox="0 0 16 16"><path d="M14 1C9 1 3.500 2.500 2.600 4.500V11.500H6" fill="none" stroke="#18a0d8" stroke-width="1.100"/><path d="M0.500 6.500L2.600 4.500L4.700 6.500" fill="none" stroke="#18a0d8" stroke-width="1.100"/><circle cx="8.200" cy="7.500" r="3.200" fill="#fff" stroke="#18a0d8" stroke-width="1.200"/><path d="M7 15.500l0.800 -2.800l6.200 -6.200l2 2l-6.200 6.200z" fill="#f0c030" stroke="#222" stroke-width="0.800"/><path d="M13 7.500l2 2l1 -1l-2 -2z" fill="#e03030"/><path d="M7 15.500l0.800 -2.800l2 2z" fill="#222"/></symbol>
<symbol id="iExt" viewBox="0 0 17 16"><path d="M0.800 6L8.500 1L16.200 6V13L12.500 15.200L8.500 12.500L4.500 15.200L0.800 13z" fill="url(#gExt)" stroke="#555" stroke-width="0.800" stroke-linejoin="round"/><path d="M0.800 6L8.500 1L16.200 6L12.500 8.500L8.500 5.800L4.500 8.500z" fill="#c8ecfa" stroke="#18a0d8" stroke-width="1.200" stroke-linejoin="round"/><path d="M4.500 8.500V15M12.500 8.500V15M8.500 5.800V12.500" stroke="#666" stroke-width="0.700" fill="none"/></symbol>
<symbol id="iHole" viewBox="0 0 10 16"><path d="M1.500 0.800h7v11.400l-3.500 3l-3.500 -3z" fill="#fff" stroke="#333" stroke-width="1" stroke-linejoin="round"/><path d="M1.500 12.200h7" stroke="#333" stroke-width="0.800"/></symbol>
<symbol id="iPartS" viewBox="0 0 24 23"><path d="M0.500 17.100V12.700L4.500 4.500L10.600 1.400Q12.500 0.300 14.600 2.100V9.600L23.600 14.800V17.200L16.400 20.900Q12 23.200 7.500 21.300z" fill="#d6d6d6" stroke="#3c3c3c" stroke-width="1.100" stroke-linejoin="round"/><path d="M3.100 15.400L5.800 6.200L13 2.800L13.700 10L8 12.600z" fill="#8e8e8e"/><path d="M0.900 12.900L4.800 5L10.800 1.900L12.500 1.600L5.800 6.200L3.100 15.400z" fill="#ececec"/><path d="M3.100 15.400L8 12.600L13.700 10L22.800 15L12 20L7.500 19.500z" fill="#e2e2e2"/><path d="M0.900 17L7.500 20.200Q12 21.800 16.400 19.800L23.200 16.300" fill="none" stroke="#3c3c3c" stroke-width="0.800"/><ellipse cx="11.800" cy="15.600" rx="4.600" ry="2.500" fill="#7c7c7c"/><ellipse cx="12" cy="16.600" rx="3" ry="1.300" fill="#fff"/><path d="M7.400 19.500Q12 22 16.400 19.500" fill="none" stroke="#8a8a8a" stroke-width="1.200"/></symbol>
</defs></svg>
<svg style="left:43px;top:175px" width="16" height="15" viewBox="0 0 24 23"><use href="#iPartS"/></svg>
<div class="abs" style="left:63px;top:176px;font-size:12.3px;line-height:14px;white-space:nowrap;letter-spacing:-0.136px;">Teile-Navigator</div>
<div class="abs" style="left:393px;top:178px;width:12px;height:11px;border:1px solid #111;border-top-width:2px"></div>
<div class="abs" style="left:45px;top:197px;width:362px;height:713px;border:1px solid #dedede;background:#fff"></div>
<div class="abs" style="left:46px;top:236px;width:360px;height:1px;background:#e6e6e6"></div>
<div class="abs" style="left:46px;top:237px;width:360px;height:20px;background:#f8f8f8"></div>
<div class="abs" style="left:46px;top:256px;width:360px;height:1px;background:#e6e6e6"></div>
<div class="abs" style="left:46px;top:276px;width:360px;height:1px;background:#e6e6e6"></div>
<div class="abs" style="left:46px;top:277px;width:360px;height:20px;background:#f8f8f8"></div>
<div class="abs" style="left:46px;top:296px;width:360px;height:1px;background:#e6e6e6"></div>
<div class="abs" style="left:46px;top:316px;width:360px;height:1px;background:#e6e6e6"></div>
<div class="abs" style="left:46px;top:317px;width:360px;height:20px;background:#f8f8f8"></div>
<div class="abs" style="left:46px;top:336px;width:360px;height:1px;background:#e6e6e6"></div>
<div class="abs" style="left:46px;top:356px;width:360px;height:1px;background:#e6e6e6"></div>
<div class="abs" style="left:46px;top:357px;width:360px;height:20px;background:#f8f8f8"></div>
<div class="abs" style="left:46px;top:376px;width:360px;height:1px;background:#e6e6e6"></div>
<div class="abs" style="left:46px;top:396px;width:360px;height:1px;background:#e6e6e6"></div>
<div class="abs" style="left:46px;top:397px;width:360px;height:20px;background:#f8f8f8"></div>
<div class="abs" style="left:46px;top:416px;width:360px;height:1px;background:#e6e6e6"></div>
<div class="abs" style="left:46px;top:436px;width:360px;height:1px;background:#e6e6e6"></div>
<div class="abs" style="left:46px;top:437px;width:360px;height:20px;background:#f8f8f8"></div>
<div class="abs" style="left:46px;top:456px;width:360px;height:1px;background:#e6e6e6"></div>
<div class="abs" style="left:46px;top:476px;width:360px;height:1px;background:#e6e6e6"></div>
<div class="abs" style="left:46px;top:477px;width:360px;height:20px;background:#f8f8f8"></div>
<div class="abs" style="left:46px;top:496px;width:360px;height:1px;background:#e6e6e6"></div>
<div class="abs" style="left:46px;top:516px;width:360px;height:1px;background:#e6e6e6"></div>
<div class="abs" style="left:46px;top:517px;width:360px;height:20px;background:#f8f8f8"></div>
<div class="abs" style="left:46px;top:536px;width:360px;height:1px;background:#e6e6e6"></div>
<div class="abs" style="left:46px;top:556px;width:360px;height:1px;background:#e6e6e6"></div>
<div class="abs" style="left:46px;top:557px;width:360px;height:20px;background:#f8f8f8"></div>
<div class="abs" style="left:46px;top:576px;width:360px;height:1px;background:#e6e6e6"></div>
<div class="abs" style="left:46px;top:596px;width:360px;height:1px;background:#e6e6e6"></div>
<div class="abs" style="left:46px;top:597px;width:360px;height:20px;background:#f8f8f8"></div>
<div class="abs" style="left:46px;top:616px;width:360px;height:1px;background:#e6e6e6"></div>
<div class="abs" style="left:46px;top:636px;width:360px;height:1px;background:#e6e6e6"></div>
<div class="abs" style="left:46px;top:637px;width:360px;height:20px;background:#f8f8f8"></div>
<div class="abs" style="left:46px;top:656px;width:360px;height:1px;background:#e6e6e6"></div>
<div class="abs" style="left:46px;top:676px;width:360px;height:1px;background:#e6e6e6"></div>
<div class="abs" style="left:46px;top:677px;width:360px;height:20px;background:#f8f8f8"></div>
<div class="abs" style="left:46px;top:696px;width:360px;height:1px;background:#e6e6e6"></div>
<div class="abs" style="left:46px;top:716px;width:360px;height:1px;background:#e6e6e6"></div>
<div class="abs" style="left:46px;top:717px;width:360px;height:20px;background:#f8f8f8"></div>
<div class="abs" style="left:46px;top:736px;width:360px;height:1px;background:#e6e6e6"></div>
<div class="abs" style="left:46px;top:756px;width:360px;height:1px;background:#e6e6e6"></div>
<div class="abs" style="left:46px;top:757px;width:360px;height:20px;background:#f8f8f8"></div>
<div class="abs" style="left:46px;top:776px;width:360px;height:1px;background:#e6e6e6"></div>
<div class="abs" style="left:46px;top:796px;width:360px;height:1px;background:#e6e6e6"></div>
<div class="abs" style="left:46px;top:797px;width:360px;height:20px;background:#f8f8f8"></div>
<div class="abs" style="left:46px;top:816px;width:360px;height:1px;background:#e6e6e6"></div>
<div class="abs" style="left:46px;top:836px;width:360px;height:1px;background:#e6e6e6"></div>
<div class="abs" style="left:46px;top:837px;width:360px;height:20px;background:#f8f8f8"></div>
<div class="abs" style="left:46px;top:856px;width:360px;height:1px;background:#e6e6e6"></div>
<div class="abs" style="left:46px;top:876px;width:360px;height:1px;background:#e6e6e6"></div>
<div class="abs" style="left:46px;top:877px;width:360px;height:20px;background:#f8f8f8"></div>
<div class="abs" style="left:46px;top:896px;width:360px;height:1px;background:#e6e6e6"></div>
<div class="abs" style="left:46px;top:198px;width:360px;height:19px;background:#efefef;border-bottom:1px solid #dcdcdc"></div>
<div class="abs" style="left:245px;top:198px;width:1px;height:711px;background:#e4e4e4"></div>
<div class="abs" style="left:245px;top:198px;width:1px;height:19px;background:#cfcfcf"></div>
<div class="abs" style="left:269px;top:198px;width:1px;height:711px;background:#e4e4e4"></div>
<div class="abs" style="left:269px;top:198px;width:1px;height:19px;background:#cfcfcf"></div>
<div class="abs" style="left:293px;top:198px;width:1px;height:711px;background:#e4e4e4"></div>
<div class="abs" style="left:293px;top:198px;width:1px;height:19px;background:#cfcfcf"></div>
<div class="abs" style="left:393px;top:198px;width:1px;height:711px;background:#e4e4e4"></div>
<div class="abs" style="left:393px;top:198px;width:1px;height:19px;background:#cfcfcf"></div>
<div class="abs" style="left:52px;top:201px;font-size:12.3px;line-height:14px;white-space:nowrap;letter-spacing:-0.203px;">Name</div>
<div class="abs" style="left:101px;top:205px;width:0;height:0;border-left:4.500px solid transparent;border-right:4.500px solid transparent;border-bottom:5.500px solid #111"></div>
<div class="abs" style="left:252px;top:201px;font-size:12.3px;line-height:14px;white-space:nowrap">A.</div>
<div class="abs" style="left:276px;top:201px;font-size:12.3px;line-height:14px;white-space:nowrap">A.</div>
<div class="abs" style="left:300px;top:201px;font-size:12.3px;line-height:14px;white-space:nowrap;letter-spacing:-0.064px;">Kommentar</div>
<div class="abs" style="left:55px;top:227px;width:0;height:56px;border-left:1px dotted #9a9a9a"></div>
<div class="abs" style="left:56px;top:227px;width:9px;height:0;border-top:1px dotted #9a9a9a"></div>
<div class="abs" style="left:60px;top:247px;width:5px;height:0;border-top:1px dotted #9a9a9a"></div>
<div class="abs" style="left:60px;top:267px;width:5px;height:0;border-top:1px dotted #9a9a9a"></div>
<div class="abs" style="left:60px;top:287px;width:5px;height:0;border-top:1px dotted #9a9a9a"></div>
<div class="abs" style="left:74px;top:297px;width:0;height:250px;border-left:1px dotted #9a9a9a"></div>
<div class="abs" style="left:75px;top:307px;width:9px;height:0;border-top:1px dotted #9a9a9a"></div>
<div class="abs" style="left:75px;top:327px;width:9px;height:0;border-top:1px dotted #9a9a9a"></div>
<div class="abs" style="left:75px;top:347px;width:9px;height:0;border-top:1px dotted #9a9a9a"></div>
<div class="abs" style="left:75px;top:367px;width:9px;height:0;border-top:1px dotted #9a9a9a"></div>
<div class="abs" style="left:75px;top:387px;width:9px;height:0;border-top:1px dotted #9a9a9a"></div>
<div class="abs" style="left:75px;top:407px;width:9px;height:0;border-top:1px dotted #9a9a9a"></div>
<div class="abs" style="left:75px;top:427px;width:9px;height:0;border-top:1px dotted #9a9a9a"></div>
<div class="abs" style="left:75px;top:447px;width:9px;height:0;border-top:1px dotted #9a9a9a"></div>
<div class="abs" style="left:75px;top:467px;width:9px;height:0;border-top:1px dotted #9a9a9a"></div>
<div class="abs" style="left:75px;top:487px;width:9px;height:0;border-top:1px dotted #9a9a9a"></div>
<div class="abs" style="left:75px;top:507px;width:9px;height:0;border-top:1px dotted #9a9a9a"></div>
<div class="abs" style="left:75px;top:527px;width:9px;height:0;border-top:1px dotted #9a9a9a"></div>
<div class="abs" style="left:75px;top:547px;width:9px;height:0;border-top:1px dotted #9a9a9a"></div>
<div class="abs" style="left:51px;top:243px;width:9px;height:9px;border:1px solid #d8d8d8;background:#fff"></div><div class="abs" style="left:53px;top:247px;width:5px;height:1px;background:#111"></div><div class="abs" style="left:55px;top:245px;width:1px;height:5px;background:#111"></div>
<div class="abs" style="left:51px;top:263px;width:9px;height:9px;border:1px solid #d8d8d8;background:#fff"></div><div class="abs" style="left:53px;top:267px;width:5px;height:1px;background:#111"></div><div class="abs" style="left:55px;top:265px;width:1px;height:5px;background:#111"></div>
<div class="abs" style="left:51px;top:283px;width:9px;height:9px;border:1px solid #d8d8d8;background:#fff"></div><div class="abs" style="left:53px;top:287px;width:5px;height:1px;background:#111"></div>
<svg style="left:65px;top:219px" width="15" height="15" viewBox="0 0 15 15"><circle cx="7.500" cy="7.500" r="6.800" fill="#fff" stroke="#333" stroke-width="0.900"/><path d="M7.500 3v4.500H4.200" fill="none" stroke="#333" stroke-width="0.900"/><path d="M7.500 1v1M7.500 13v1M1 7.500h1M13 7.500h1" stroke="#333" stroke-width="0.900"/></svg>
<div class="abs" style="left:84px;top:220px;font-size:12.1px;line-height:14px;white-space:nowrap;letter-spacing:-0.017px;">Historien-Konstruktionsmo...</div>
<div class="abs" style="left:81px;top:217px;width:313px;height:20px;border:1px dotted #222"></div>
<svg style="left:65px;top:239px" width="16" height="16" viewBox="0 0 16 16"><rect x="0.500" y="0.500" width="15" height="15" fill="#f4f4f4" stroke="#333" stroke-width="1"/><path d="M0.500 3.500h15" stroke="#333" stroke-width="0.800"/><path d="M10 2h4" stroke="#333" stroke-width="0.800" stroke-dasharray="1 0.600"/><path d="M5 8l2 -2.500l1.500 1l-0.500 2l4.500 2l-4 2.800l-5.500 -2z" fill="#8a8a8a" stroke="#555" stroke-width="0.600"/><ellipse cx="8.500" cy="11.200" rx="1.800" ry="0.900" fill="#ddd" stroke="#555" stroke-width="0.500"/></svg>
<div class="abs" style="left:84px;top:240px;font-size:12.1px;line-height:14px;white-space:nowrap;letter-spacing:0.004px;">Modellansichten</div>
<svg style="left:66px;top:260px" width="15" height="13" viewBox="0 0 16 14"><use href="#iChk"/></svg>
<svg style="left:82px;top:259px" width="14" height="16" viewBox="0 0 14 16"><path d="M0.800 5.500L9.500 0.800L11.800 11L0.800 15z" fill="#fde8d0" stroke="#ee7d11" stroke-width="1.100" stroke-linejoin="round"/><rect x="3.500" y="6" width="6.500" height="5.500" rx="0.800" fill="#8a8a8a" stroke="#444" stroke-width="0.700"/><circle cx="6.500" cy="8.800" r="1.800" fill="#bbb" stroke="#444" stroke-width="0.600"/><path d="M10 7.500l3.200 -1.200v4.800l-3.200 -1.200z" fill="#777" stroke="#444" stroke-width="0.600"/></svg>
<div class="abs" style="left:100px;top:260px;font-size:12.1px;line-height:14px;white-space:nowrap;letter-spacing:-0.560px;">Kameras</div>
<svg style="left:66px;top:280px" width="15" height="15" viewBox="0 0 15 15"><circle cx="7.500" cy="7.500" r="7" fill="url(#gBall)" stroke="#0a7a12" stroke-width="0.600"/></svg>
<svg style="left:81px;top:279px" width="16" height="16" viewBox="0 0 16 16"><rect x="1" y="1" width="14" height="14" fill="#fafafa" stroke="#9a9a9a" stroke-width="1"/><rect x="0" y="0" width="2" height="2" fill="#fff" stroke="#999" stroke-width="0.500"/><rect x="14" y="0" width="2" height="2" fill="#fff" stroke="#999" stroke-width="0.500"/><rect x="0" y="14" width="2" height="2" fill="#fff" stroke="#999" stroke-width="0.500"/><rect x="14" y="14" width="2" height="2" fill="#fff" stroke="#999" stroke-width="0.500"/><rect x="3.500" y="3.500" width="6" height="6" fill="#fff" stroke="#333" stroke-width="1"/><rect x="6.500" y="6.500" width="6.500" height="6.500" fill="#f08a1c" stroke="#c86400" stroke-width="0.800"/></svg>
<div class="abs" style="left:100px;top:280px;font-size:12.1px;line-height:14px;white-space:nowrap;letter-spacing:0.075px;">Modellhistorie</div>
<svg style="left:84px;top:301px" width="16" height="12" viewBox="0 0 16 12"><use href="#iEye"/></svg>
<svg style="left:100px;top:299px" width="16" height="16" viewBox="0 0 16 16" fill="none" stroke="#d8587c" stroke-width="1.100"><path d="M8 2.500V9.500M8 9.500L2 14M8 9.500L14 14"/><circle cx="8" cy="9.500" r="3.600"/><path d="M8 0.300l1.600 2.600h-3.200zM0.500 15l0.600 -2.800l2.200 2zM15.500 15l-0.600 -2.800l-2.200 2z" fill="#d8587c" stroke="none"/></svg>
<div class="abs" style="left:119px;top:300px;font-size:12.1px;line-height:14px;white-space:nowrap;letter-spacing:-0.177px;">Bezugskoordinatensy...</div>
<svg style="left:84px;top:319px" width="16" height="15" viewBox="0 0 16 14"><use href="#iEyeX"/></svg>
<svg style="left:100px;top:318px" width="17" height="17" viewBox="0 0 16 16"><use href="#iSk"/></svg>
<div class="abs" style="left:119px;top:320px;font-size:12.1px;line-height:14px;white-space:nowrap;letter-spacing:-0.742px;color:#a8a8a8">Skizze (1) "SKETCH_00...</div>
<svg style="left:84px;top:341px" width="16" height="12" viewBox="0 0 16 12"><use href="#iEye"/></svg>
<svg style="left:100px;top:339px" width="17" height="16" viewBox="0 0 17 16"><path d="M1 8.500L4 3.500L11 1L16 4.500V10L9 15L1 11.500z" fill="url(#gExt)" stroke="#555" stroke-width="0.800" stroke-linejoin="round"/><path d="M3.500 3.800L10.500 1.200L15.500 4.500L9 7.500z" fill="#c8ecfa" stroke="#18a0d8" stroke-width="1.200" stroke-linejoin="round"/><path d="M2 5.500L8.500 9M5 2.500L12 6" stroke="#18a0d8" stroke-width="1" fill="none"/><path d="M9 7.500V15" stroke="#666" stroke-width="0.700"/></svg>
<div class="abs" style="left:119px;top:340px;font-size:12.1px;line-height:14px;white-space:nowrap;letter-spacing:-0.314px;">Drehen (7)</div>
<svg style="left:84px;top:361px" width="16" height="12" viewBox="0 0 16 12"><use href="#iEye"/></svg>
<svg style="left:100px;top:359px" width="17" height="16" viewBox="0 0 17 16"><path d="M0.800 5.500L8.500 0.800L16.200 4.500V11L8.500 15.500L0.800 11z" fill="url(#gExt)" stroke="#555" stroke-width="0.800" stroke-linejoin="round"/><path d="M8.500 0.800L16.200 4.500L11 8.500L11 15z" fill="#b0b0b0" stroke="#555" stroke-width="0.600" stroke-linejoin="round"/><path d="M0.800 6C1.500 4 4 2.500 8.500 0.800L11.500 6.500C7 7.500 5 9.500 4.500 12.500L0.800 11z" fill="#f08a1c" stroke="#c86400" stroke-width="0.600" stroke-linejoin="round"/></svg>
<div class="abs" style="left:119px;top:360px;font-size:12.1px;line-height:14px;white-space:nowrap;letter-spacing:-0.086px;">Kantenverrundung (8)</div>
<svg style="left:84px;top:379px" width="16" height="15" viewBox="0 0 16 14"><use href="#iEyeX"/></svg>
<svg style="left:100px;top:378px" width="17" height="17" viewBox="0 0 16 16"><use href="#iSk"/></svg>
<div class="abs" style="left:119px;top:380px;font-size:12.1px;line-height:14px;white-space:nowrap;letter-spacing:-0.742px;color:#a8a8a8">Skizze (9) "SKETCH_00...</div>
<svg style="left:84px;top:401px" width="16" height="12" viewBox="0 0 16 12"><use href="#iEye"/></svg>
<svg style="left:104px;top:399px" width="10" height="16" viewBox="0 0 10 16"><use href="#iHole"/></svg>
<div class="abs" style="left:119px;top:400px;font-size:12.1px;line-height:14px;white-space:nowrap;letter-spacing:-0.229px;">Ø8 Bohrung (10)</div>
<svg style="left:84px;top:421px" width="16" height="12" viewBox="0 0 16 12"><use href="#iEye"/></svg>
<svg style="left:104px;top:419px" width="10" height="16" viewBox="0 0 10 16"><use href="#iHole"/></svg>
<div class="abs" style="left:119px;top:420px;font-size:12.1px;line-height:14px;white-space:nowrap;letter-spacing:-0.169px;">Ø5 Bohrung (11)</div>
<svg style="left:84px;top:441px" width="16" height="12" viewBox="0 0 16 12"><use href="#iEye"/></svg>
<svg style="left:100px;top:439px" width="17" height="16" viewBox="0 0 17 16"><use href="#iExt"/></svg>
<div class="abs" style="left:119px;top:440px;font-size:12.1px;line-height:14px;white-space:nowrap;letter-spacing:-0.254px;">Extrudieren (12)</div>
<svg style="left:84px;top:461px" width="16" height="12" viewBox="0 0 16 12"><use href="#iEye"/></svg>
<svg style="left:103px;top:459px" width="11" height="16" viewBox="0 0 11 16"><path d="M1.500 2h8v11l-2 2h-4l-2 -2z" fill="#e8e8e8" stroke="#333" stroke-width="1" stroke-linejoin="round"/><path d="M1.500 4.500h8M1.500 7h8M1.500 9.500h8M1.500 12h8" stroke="#333" stroke-width="0.800"/><path d="M5.500 0v16" stroke="#f08a1c" stroke-width="1.200"/></svg>
<div class="abs" style="left:119px;top:460px;font-size:12.1px;line-height:14px;white-space:nowrap;letter-spacing:-0.261px;">M14 x 1.5 Detailliertes...</div>
<svg style="left:84px;top:479px" width="16" height="15" viewBox="0 0 16 14"><use href="#iEyeX"/></svg>
<svg style="left:100px;top:478px" width="17" height="17" viewBox="0 0 16 16"><use href="#iSk"/></svg>
<div class="abs" style="left:119px;top:480px;font-size:12.1px;line-height:14px;white-space:nowrap;letter-spacing:-0.742px;color:#a8a8a8">Skizze (14) "SKETCH_0...</div>
<svg style="left:84px;top:501px" width="16" height="12" viewBox="0 0 16 12"><use href="#iEye"/></svg>
<svg style="left:100px;top:499px" width="17" height="16" viewBox="0 0 17 16"><use href="#iExt"/></svg>
<div class="abs" style="left:119px;top:500px;font-size:12.1px;line-height:14px;white-space:nowrap;letter-spacing:-0.254px;">Extrudieren (15)</div>
<svg style="left:84px;top:519px" width="16" height="15" viewBox="0 0 16 14"><use href="#iEyeX"/></svg>
<svg style="left:100px;top:518px" width="17" height="17" viewBox="0 0 16 16"><use href="#iSk"/></svg>
<div class="abs" style="left:119px;top:520px;font-size:12.1px;line-height:14px;white-space:nowrap;letter-spacing:-0.742px;color:#a8a8a8">Skizze (16) "SKETCH_0...</div>
<svg style="left:84px;top:541px" width="16" height="12" viewBox="0 0 16 12"><use href="#iEye"/></svg>
<svg style="left:100px;top:539px" width="17" height="16" viewBox="0 0 17 16"><use href="#iExt"/></svg>
<div class="abs" style="left:119px;top:540px;font-size:12.1px;line-height:14px;white-space:nowrap;letter-spacing:-0.070px;font-weight:bold">Extrudieren (17)</div>
<svg style="left:274px;top:280px" width="16" height="14" viewBox="0 0 16 14"><use href="#iChk"/></svg>
<svg style="left:274px;top:300px" width="16" height="14" viewBox="0 0 16 14"><use href="#iChk"/></svg>
<svg style="left:274px;top:320px" width="16" height="14" viewBox="0 0 16 14"><use href="#iChk"/></svg>
<svg style="left:274px;top:340px" width="16" height="14" viewBox="0 0 16 14"><use href="#iChk"/></svg>
<svg style="left:274px;top:360px" width="16" height="14" viewBox="0 0 16 14"><use href="#iChk"/></svg>
<svg style="left:274px;top:380px" width="16" height="14" viewBox="0 0 16 14"><use href="#iChk"/></svg>
<svg style="left:274px;top:400px" width="16" height="14" viewBox="0 0 16 14"><use href="#iChk"/></svg>
<svg style="left:274px;top:420px" width="16" height="14" viewBox="0 0 16 14"><use href="#iChk"/></svg>
<svg style="left:274px;top:440px" width="16" height="14" viewBox="0 0 16 14"><use href="#iChk"/></svg>
<svg style="left:274px;top:460px" width="16" height="14" viewBox="0 0 16 14"><use href="#iChk"/></svg>
<svg style="left:274px;top:480px" width="16" height="14" viewBox="0 0 16 14"><use href="#iChk"/></svg>
<svg style="left:274px;top:500px" width="16" height="14" viewBox="0 0 16 14"><use href="#iChk"/></svg>
<svg style="left:274px;top:520px" width="16" height="14" viewBox="0 0 16 14"><use href="#iChk"/></svg>
<svg style="left:274px;top:540px" width="16" height="14" viewBox="0 0 16 14"><use href="#iChk"/></svg>
<svg style="left:253px;top:540px" width="10" height="14" viewBox="0 0 10 14" fill="none" stroke="#222" stroke-width="0.900"><path d="M2 1.500V12M2 2.500h3M2 7h3M2 11.500h3"/><rect x="5" y="1" width="3.500" height="3" fill="#fff"/><rect x="5" y="5.500" width="3.500" height="3" fill="#f08a1c" stroke="#c86400"/><rect x="5" y="10" width="3.500" height="3" fill="#fff"/></svg>
<div class="abs" style="left:45px;top:912px;width:362px;height:6px;background:#d2d2d2;border:1px solid #b4b4b4"></div>
<div class="abs" style="left:54px;top:927px;width:0;height:0;border-top:4.500px solid transparent;border-bottom:4.500px solid transparent;border-left:5px solid #1a5a78"></div>
<div class="abs" style="left:68px;top:925px;font-size:13px;line-height:15px;color:#1a5a78;white-space:nowrap;letter-spacing:-0.182px;">Suchen</div>
<div class="abs" style="left:45px;top:941px;width:362px;height:2px;background:#c8c8c8"></div>
<div class="abs" style="left:54px;top:950px;width:0;height:0;border-top:4.500px solid transparent;border-bottom:4.500px solid transparent;border-left:5px solid #1a5a78"></div>
<div class="abs" style="left:68px;top:948px;font-size:13px;line-height:15px;color:#1a5a78;white-space:nowrap;letter-spacing:0.383px;">Abhängigkeiten</div>
<div class="abs" style="left:45px;top:964px;width:362px;height:2px;background:#c8c8c8"></div>
<div class="abs" style="left:54px;top:973px;width:0;height:0;border-top:4.500px solid transparent;border-bottom:4.500px solid transparent;border-left:5px solid #1a5a78"></div>
<div class="abs" style="left:68px;top:971px;font-size:13px;line-height:15px;color:#1a5a78;white-space:nowrap;letter-spacing:0.095px;">Details</div>
<div class="abs" style="left:45px;top:987px;width:362px;height:2px;background:#c8c8c8"></div>
<div class="abs" style="left:54px;top:996px;width:0;height:0;border-top:4.500px solid transparent;border-bottom:4.500px solid transparent;border-left:5px solid #1a5a78"></div>
<div class="abs" style="left:68px;top:994px;font-size:13px;line-height:15px;color:#1a5a78;white-space:nowrap;letter-spacing:0.099px;">Vorschau</div>
<div class="abs" style="left:45px;top:1010px;width:362px;height:2px;background:#c8c8c8"></div>
<div class="abs" style="left:3px;top:291px;width:34px;height:43px;background:#fff;border:1px solid #a8a8a8;border-right:none"></div>
<svg style="left:9px;top:176px" width="18" height="18" viewBox="0 0 20 20" fill="none" stroke="#3a3a3a" stroke-width="1.100"><circle cx="10" cy="10" r="3"/><path d="M8.500 1.500h3l0.500 2.300l1.500 0.700l2.100 -1.200l2.100 2.100l-1.200 2.100l0.700 1.500l2.300 0.500v3l-2.300 0.500l-0.700 1.500l1.200 2.100l-2.100 2.100l-2.100 -1.200l-1.500 0.700l-0.500 2.300h-3l-0.500 -2.300l-1.500 -0.700l-2.100 1.200l-2.100 -2.100l1.200 -2.100l-0.700 -1.500l-2.300 -0.500v-3l2.300 -0.500l0.700 -1.500l-1.200 -2.100l2.100 -2.100l2.100 1.200l1.500 -0.700z" transform="translate(1.500 1.500) scale(0.850)"/></svg>
<svg style="left:9px;top:211px" width="20" height="24" viewBox="0 0 20 24" stroke="#555" stroke-width="0.900" stroke-linejoin="round"><path d="M2 8.500L11 4.500L11 12L2 16z" fill="#e8e8e8"/><path d="M2 8.500L7 5L16 1.500L19 3.500L19 10.500L11 15V22L7 23.500L2 21z" fill="#bdbdbd"/><path d="M2 8.500L7 5L11 7.500L16 5L19 3.500L16 1.500L11 3.500L7 5M11 7.500V15M2 14.500L7 17L11 15M7 10.500V23.500M7 10.500L2 8.500M7 10.500L11 7.500" fill="none"/><path d="M7 5L11 3.500L16 1.500L19 3.500L11 7.500z" fill="#eee"/><path d="M2 8.500L7 10.500V23.500L2 21z" fill="#d4d4d4"/></svg>
<svg style="left:7px;top:254px" width="26" height="28" viewBox="0 0 26 28" stroke-linejoin="round"><path d="M1.500 6.500L7.500 3.500L13.500 6.500V13.500L7.500 16.500L1.500 13.500z" fill="#f08a1c" stroke="#c86400" stroke-width="0.800"/><path d="M1.500 6.500L7.500 9.500L13.500 6.500M7.500 9.500V16.500" fill="none" stroke="#c86400" stroke-width="0.800"/><path d="M7.500 3.500L13 1L18.500 4V10L13.500 13.500V6.500z" fill="#d8d8d8" stroke="#666" stroke-width="0.800"/><path d="M1.500 13.500L7.500 16.500L13.500 13.500L13.500 19L7.500 22.500L1.500 19.500z" fill="#d0d0d0" stroke="#666" stroke-width="0.800"/><path d="M11.500 13.500L24.500 25.500V13.500L11.500 25.500z" fill="#fff" stroke="#111" stroke-width="1.100"/></svg>
<svg style="left:8px;top:300px" width="24" height="23" viewBox="0 0 24 23"><use href="#iPartS"/></svg>
<svg style="left:11px;top:343px" width="20" height="26" viewBox="0 0 20 26" fill="#e6e6e6" stroke="#444" stroke-width="0.900" stroke-linejoin="round"><path d="M1.500 7L8 3.500L8 19.500L1.500 23z"/><path d="M1.500 7L4 8V24L1.500 23zM4 8L10.500 4.500V20.500L4 24z"/><path d="M6.500 9L13 5.500V21.500L6.500 25zM4 8L6.500 9V25L4 24z"/><path d="M9.500 10.500L18.500 6V20.500L9.500 25zM6.500 9L9.500 10.500V25L6.500 25z" fill="#f2f2f2"/><path d="M8 3.500L10.500 2.500L18.500 6" fill="none"/></svg>
<svg style="left:7px;top:383px" width="26" height="28" viewBox="0 0 26 28"><svg x="0" y="8" width="21" height="20" viewBox="0 0 24 23"><use href="#iPartS"/></svg><path d="M11.500 3.500L20.500 8.500M11.500 1.500v5M21.500 6v17M13 2l2.500 3M13 5l2.500 -3M20 5l3 -3M20 2l3 3" fill="none" stroke="#ee7d11" stroke-width="1.200"/></svg>
<svg style="left:6px;top:430px" width="26" height="30" viewBox="0 0 26 30"><defs><radialGradient id="gInfo" cx="0.400" cy="0.350" r="0.700"><stop offset="0" stop-color="#b4b4b4"/><stop offset="1" stop-color="#5a5a5a"/></radialGradient></defs><circle cx="10.500" cy="17" r="8.500" fill="url(#gInfo)" stroke="#555" stroke-width="0.600"/><path d="M10.500 14.500v7.500" stroke="#fff" stroke-width="2"/><circle cx="10.500" cy="11.800" r="1.200" fill="#fff"/><path d="M11 4.500c5 0 9.500 4 9.500 9M11 1.500c7 0 12.500 5.500 12.500 12" fill="none" stroke="#aaa" stroke-width="0.900"/></svg>
<svg style="left:8px;top:476px" width="24" height="24" viewBox="0 0 24 24"><rect x="0.500" y="0.500" width="23" height="23" fill="#f2f2f2" stroke="#444" stroke-width="1"/><path d="M0.500 4.500h23" stroke="#444" stroke-width="0.900"/><path d="M15.500 2.500h6" stroke="#444" stroke-width="1" stroke-dasharray="1.200 1"/><circle cx="12" cy="14" r="7.300" fill="#1c86a8"/><path d="M8 9.500c2 0 3 1.500 2.500 3s-2.500 1.500 -3 3.500M13 7.500c0.500 2 3 2 3.500 4s-2 2.500 -1.500 4.500s2 1.500 3 0.500M10 18.500c1 -1 2.500 -0.500 3 1" fill="none" stroke="#9fd8e8" stroke-width="1.500"/></svg>
<svg style="left:7px;top:519px" width="24" height="24" viewBox="0 0 24 24" fill="none" stroke="#3a3a3a" stroke-width="1"><circle cx="12" cy="12" r="11"/><path d="M12 4.500V12.500H6.500M12 1v2M12 21v2M1 12h2M21 12h2"/></svg>
<svg style="left:8px;top:562px" width="24" height="26" viewBox="0 0 24 26"><path d="M0.500 25.500V5.500h2.500v-3h6v3h14.500v20z" fill="#fafafa" stroke="#444" stroke-width="1" stroke-linejoin="round"/><path d="M5.500 21.500L17 10M6 10.500L18 22" stroke="#555" stroke-width="2.600" fill="none" stroke-linecap="round"/><path d="M3.500 9.500c1 -2 3.500 -2.500 5 -1l-2 2l1.500 1.500l2 -2c1 1.500 0.500 4 -1.500 5" fill="#999" stroke="#444" stroke-width="0.800"/><path d="M14 8.500l3 -2.500l4.500 3l-1.500 2.500z" fill="#888" stroke="#444" stroke-width="0.800"/></svg>
<svg style="left:8px;top:605px" width="24" height="30" viewBox="0 0 24 30"><defs><linearGradient id="gRb" x1="0" x2="0" y1="0" y2="1"><stop offset="0" stop-color="#ff2020"/><stop offset="0.250" stop-color="#ffd000"/><stop offset="0.500" stop-color="#20e020"/><stop offset="0.750" stop-color="#20c0e0"/><stop offset="1" stop-color="#2020ff"/></linearGradient></defs><rect x="2" y="2.500" width="8" height="22" fill="url(#gRb)"/><path d="M12 7L19 23" stroke="#111" stroke-width="2.600" stroke-linecap="round"/><path d="M19 23l1.500 2.500" stroke="#888" stroke-width="2"/><path d="M11.500 1v9M7 5.500h9M8.500 2.500l6 6M14.500 2.500l-6 6" stroke="#fff" stroke-width="1.100"/></svg>
<svg style="left:6px;top:649px" width="26" height="30" viewBox="0 0 26 30"><rect x="5.500" y="3" width="5" height="20" fill="#3a7ad8"/><path d="M5.500 5l5 3M5.500 9l5 3M5.500 13l5 3M5.500 17l5 3" stroke="#9cc4f4" stroke-width="1.200"/><path d="M4 23h8l-4 3.500z" fill="#e8c020"/><path d="M2 24.500l3 -1M14 24.500l-3 -1M8 28v-1.500" stroke="#e8a000" stroke-width="1"/><path d="M12 8h12M13 12h10l-7 7" fill="none" stroke="#2a5ac8" stroke-width="1.200"/><path d="M12 7L19 23" stroke="#111" stroke-width="2.600" stroke-linecap="round"/><path d="M19 23l1.500 2.500" stroke="#888" stroke-width="2"/><path d="M11 1v9M6.500 5.500h9M8 2.500l6 6M14 2.500l-6 6" stroke="#fff" stroke-width="1.100"/></svg>
<div id="tabs"></div>
<div id="view"></div>
<div class="abs" style="left:417px;top:195px;width:1320px;height:2px;background:#005d85"></div>
<div class="abs" style="left:554px;top:171px;width:197px;height:25px;background:#005d85"></div>
<svg style="left:423px;top:175px" width="16" height="16" viewBox="0 0 16 16" fill="none" stroke="#3a3a3a" stroke-width="1" stroke-linejoin="round"><path d="M1.200 7V0.600L5.900 2.700L11 0.600L15.400 1.800V13.900L11 12.200L9.800 12.700" fill="#fff"/><path d="M5.900 2.700V5.600M11 0.600V12.200"/><circle cx="5.200" cy="10.600" r="4.700" fill="#fff"/><path d="M3 12.800L5.700 9L7.400 8.400L4.700 12.200z" fill="#999" stroke-width="0.600"/></svg>
<div class="abs" style="left:443.5px;top:176px;font-size:12.3px;line-height:14px;white-space:nowrap;letter-spacing:-0.364px;">Discovery Center</div>
<svg style="left:560px;top:176px" width="15" height="14" viewBox="0 0 24 23"><use href="#iPartS"/></svg>
<div class="abs" style="left:580px;top:176px;font-size:12.3px;line-height:14px;white-space:nowrap;color:#fff;letter-spacing:-0.259px;">Spannkralle_Alzmetall.prt</div>
<svg style="left:719px;top:178px" width="11" height="11" viewBox="0 0 11 11" fill="none" stroke="#fff" stroke-width="1.400"><path d="M5.500 1H1V10H8.500V6.500"/><path d="M4.500 5.500H9.500M7.500 3L10 5.500L7.500 8" stroke-width="1.300"/></svg>
<svg style="left:735px;top:179px" width="9" height="9" viewBox="0 0 9 9" fill="none" stroke="#fff" stroke-width="2"><path d="M1 1L8 8M8 1L1 8"/></svg>
<svg style="left:0;top:0" width="1737" height="1022" viewBox="0 0 1737 1022">
<defs>
<linearGradient id="mHub" x1="881" x2="1243" y1="0" y2="0" gradientUnits="userSpaceOnUse"><stop offset="0" stop-color="#a2aaac"/><stop offset="0.06" stop-color="#acb4b6"/><stop offset="0.45" stop-color="#b6bec0"/><stop offset="0.8" stop-color="#afb7b9"/><stop offset="1" stop-color="#a6aeb0"/></linearGradient>
<linearGradient id="mThr" x1="906" x2="1221" y1="0" y2="0" gradientUnits="userSpaceOnUse"><stop offset="0" stop-color="#bcc4c6"/><stop offset="0.4" stop-color="#d2dadc"/><stop offset="0.7" stop-color="#cdd5d7"/><stop offset="1" stop-color="#b8c0c2"/></linearGradient>
<linearGradient id="mHole" x1="1005" x2="1118" y1="0" y2="0" gradientUnits="userSpaceOnUse"><stop offset="0" stop-color="#b4bcbe"/><stop offset="0.6" stop-color="#a8b0b2"/><stop offset="1" stop-color="#9ea6a8"/></linearGradient>
<linearGradient id="mFace" x1="750" x2="1380" y1="330" y2="620" gradientUnits="userSpaceOnUse"><stop offset="0" stop-color="#c4ccce"/><stop offset="0.5" stop-color="#cad2d4"/><stop offset="1" stop-color="#c3cbcd"/></linearGradient>
<clipPath id="cFl"><path id="flSil" d="M747.5 437.5 L793.8 387.5 L799.5 383.0 L886.8 344.5 L893.8 342.0 L1007.5 322.5 L1016.3 321.8 L1137.5 324.5 L1145.0 325.5 L1254.5 348.8 L1261.3 352.0 L1340.0 393.0 L1343.8 395.5 L1377.5 451.3 L1377.5 472.5 Q1366 493 1360.8 510.0 L1360.8 528.8 L1291.3 578.8 L1285.0 582.5 L1180.0 613.8 L1173.0 615.0 L1048.8 625.5 L1039.5 625.5 L918.0 611.3 L910.8 608.8 L814.5 573.8 L808.8 571.3 L754.3 520.0 L751.3 517.0 L751.3 500.0 L751.4 496.5 Q751.8 490 753.8 485.5 Q752 472 746.8 460 Z"/></clipPath>
</defs>
<path d="M881.3 550 L881.3 700 L884.5 778 Q886 792 906.5 797 L906.5 760 L897 735 Q915 728 932.5 705 Q945 702 953.8 697 Q985 690 1011.3 682 L1039.5 679 Q1072 688 1103.8 680 L1130.8 684 Q1160 690 1185.5 700 Q1196 704 1204.5 712 Q1222 728 1233.8 745 L1222 772 L1220 802 Q1230 797 1231 792 L1240 748L1233.8 745 L1220 768 L1220 799 Q1238 796 1239 786 L1241.5 700 L1242 550 Z" fill="url(#mHub)"/>
<path d="M906.5 797 L906.5 760 L897 735 Q915 728 932.5 705 Q945 702 953.8 697 Q985 690 1011.3 682 L1039.5 679 Q1072 688 1103.8 680 L1130.8 684 Q1160 690 1185.5 700 Q1196 704 1204.5 712 Q1222 728 1233.8 745 L1222 772 L1220 802 L1220 892 A156.5 69 0 0 1 907 892 Z" fill="url(#mThr)"/>
<path d="M747.5 437.5 L793.8 387.5 L799.5 383.0 L886.8 344.5 L893.8 342.0 L1007.5 322.5 L1016.3 321.8 L1137.5 324.5 L1145.0 325.5 L1254.5 348.8 L1261.3 352.0 L1340.0 393.0 L1343.8 395.5 L1377.5 451.3 L1377.5 472.5 Q1366 493 1360.8 510.0 L1360.8 528.8 L1291.3 578.8 L1285.0 582.5 L1180.0 613.8 L1173.0 615.0 L1048.8 625.5 L1039.5 625.5 L918.0 611.3 L910.8 608.8 L814.5 573.8 L808.8 571.3 L754.3 520.0 L751.3 517.0 L751.3 500.0 L751.4 496.5 Q751.8 490 753.8 485.5 Q752 472 746.8 460 Z" fill="url(#mFace)"/>
<g clip-path="url(#cFl)"><path d="M881.3 550 A181 79 0 0 1 1242.5 550 L1242.5 640 L881.3 640 Z" fill="#5a696e" opacity="0.07"/></g>
<g clip-path="url(#cFl)"><path d="M857 521 A204 91 0 0 1 1265 521 A204 91 0 0 1 857 521 Z M880.500 550 A181 79 0 0 0 1242.500 550 A181 79 0 0 0 880.500 550 Z" fill="#ffffff" fill-rule="evenodd" opacity="0.10"/></g>
<defs><filter id="mBl" x="-20%" y="-20%" width="140%" height="140%"><feGaussianBlur stdDeviation="4"/></filter></defs>
<g clip-path="url(#cFl)"><path d="M1000 452 A192 85 0 0 0 869 535 A192 85 0 0 0 960 607" fill="none" stroke="#ffffff" stroke-width="12" opacity="0.30" filter="url(#mBl)"/><path d="M1130 452 A192 85 0 0 1 1253 535" fill="none" stroke="#ffffff" stroke-width="10" opacity="0.18" filter="url(#mBl)"/></g>
<path d="M747.5 437.5 L793.8 387.5 L793.8 408.8 Q797.5 437.6 747.5 459.0 Z" fill="#bac2c4"/>
<path d="M747.5 459.0 Q797.5 437.6 793.8 408.8" stroke="#2f3638" stroke-width="0.8" fill="none" opacity="0.8"/>
<path d="M799.5 383.0 L886.8 344.5 L886.8 363.8 Q863.9 392.1 799.5 403.3 Z" fill="#bac2c4"/>
<path d="M799.5 403.3 Q863.9 392.1 886.8 363.8" stroke="#2f3638" stroke-width="0.8" fill="none" opacity="0.8"/>
<path d="M893.8 342.0 L1007.5 322.5 L1007.5 342.0 Q961.4 364.0 893.8 362.5 Z" fill="#bac2c4"/>
<path d="M893.8 362.5 Q961.4 364.0 1007.5 342.0" stroke="#2f3638" stroke-width="0.8" fill="none" opacity="0.8"/>
<path d="M1016.3 321.8 L1137.5 324.5 L1137.5 343.8 Q1075.5 355.4 1016.3 341.5 Z" fill="#bac2c4"/>
<path d="M1016.3 341.5 Q1075.5 355.4 1137.5 343.8" stroke="#2f3638" stroke-width="0.8" fill="none" opacity="0.8"/>
<path d="M1145.0 325.5 L1254.5 348.8 L1254.5 368.3 Q1186.6 367.9 1145.0 345.0 Z" fill="#bac2c4"/>
<path d="M1145.0 345.0 Q1186.6 367.9 1254.5 368.3" stroke="#2f3638" stroke-width="0.8" fill="none" opacity="0.8"/>
<path d="M1261.3 352.0 L1340.0 393.0 L1340.0 412.5 Q1278.4 399.0 1261.3 370.0 Z" fill="#bac2c4"/>
<path d="M1261.3 370.0 Q1278.4 399.0 1340.0 412.5" stroke="#2f3638" stroke-width="0.8" fill="none" opacity="0.8"/>
<path d="M1343.8 395.5 L1377.5 451.3 L1376.3 457.5 Q1333.1 439.7 1343.8 415.0 Z" fill="#bac2c4"/>
<path d="M1343.8 415.0 Q1333.1 439.7 1376.3 457.5" stroke="#2f3638" stroke-width="0.8" fill="none" opacity="0.8"/>
<path d="M793.8 387.5 L799.5 383.0 L799.5 403.3 L793.8 408.8 Z" fill="#c0c8ca"/>
<path d="M886.8 344.5 L893.8 342.0 L893.8 362.5 L886.8 363.8 Z" fill="#c0c8ca"/>
<path d="M1007.5 322.5 L1016.3 321.8 L1016.3 341.5 L1007.5 342.0 Z" fill="#c0c8ca"/>
<path d="M1137.5 324.5 L1145.0 325.5 L1145.0 345.0 L1137.5 343.8 Z" fill="#c0c8ca"/>
<path d="M1254.5 348.8 L1261.3 352.0 L1261.3 370.0 L1254.5 368.3 Z" fill="#c0c8ca"/>
<path d="M1340.0 393.0 L1343.8 395.5 L1343.8 415.0 L1340.0 412.5 Z" fill="#c0c8ca"/>
<path d="M1358.0 510.8 Q1310.4 532.5 1291.3 560.8 L1291.3 578.8 L1358.0 530.0 Z" fill="#b5bdbf"/>
<path d="M1358.0 510.8 Q1310.4 532.5 1291.3 560.8" stroke="#2f3638" stroke-width="0.8" fill="none" opacity="0.85"/>
<path d="M1285.0 562.5 Q1222.9 572.3 1180.0 593.8 L1180.0 613.8 L1285.0 582.5 Z" fill="#b5bdbf"/>
<path d="M1285.0 562.5 Q1222.9 572.3 1180.0 593.8" stroke="#2f3638" stroke-width="0.8" fill="none" opacity="0.85"/>
<path d="M1173.0 595.0 Q1108.1 592.6 1048.8 604.5 L1048.8 625.5 L1173.0 615.0 Z" fill="#b5bdbf"/>
<path d="M1173.0 595.0 Q1108.1 592.6 1048.8 604.5" stroke="#2f3638" stroke-width="0.8" fill="none" opacity="0.85"/>
<path d="M1039.5 605.0 Q983.4 590.8 918.0 590.5 L918.0 611.3 L1039.5 625.5 Z" fill="#b5bdbf"/>
<path d="M1039.5 605.0 Q983.4 590.8 918.0 590.5" stroke="#2f3638" stroke-width="0.8" fill="none" opacity="0.85"/>
<path d="M910.8 589.5 Q873.5 566.3 814.5 553.8 L814.5 573.8 L910.8 608.8 Z" fill="#b5bdbf"/>
<path d="M910.8 589.5 Q873.5 566.3 814.5 553.8" stroke="#2f3638" stroke-width="0.8" fill="none" opacity="0.85"/>
<path d="M808.8 551.3 Q796.3 523.9 754.3 502.0 L754.3 520.0 L808.8 571.3 Z" fill="#b5bdbf"/>
<path d="M808.8 551.3 Q796.3 523.9 754.3 502.0" stroke="#2f3638" stroke-width="0.8" fill="none" opacity="0.85"/>
<path d="M1360.8 510.0 L1358.0 510.8 L1358.0 530.0 L1360.8 528.8 Z" fill="#aeb6b8"/>
<path d="M1291.3 560.8 L1285.0 562.5 L1285.0 582.5 L1291.3 578.8 Z" fill="#aeb6b8"/>
<path d="M1180.0 593.8 L1173.0 595.0 L1173.0 615.0 L1180.0 613.8 Z" fill="#aeb6b8"/>
<path d="M1048.8 604.5 L1039.5 605.0 L1039.5 625.5 L1048.8 625.5 Z" fill="#aeb6b8"/>
<path d="M918.0 590.5 L910.8 589.5 L910.8 608.8 L918.0 611.3 Z" fill="#aeb6b8"/>
<path d="M814.5 553.8 L808.8 551.3 L808.8 571.3 L814.5 573.8 Z" fill="#aeb6b8"/>
<path d="M754.3 502.0 L751.3 500.0 L751.3 517.0 L754.3 520.0 Z" fill="#aeb6b8"/>
<path d="M1376.3 457.5 Q1362 482 1358.0 510.8" stroke="#2f3638" stroke-width="0.8" fill="none" opacity="0.8"/>
<path d="M1377.5 472.5 Q1366 493 1360.8 510.0 L1358.0 510.8 Q1362 482 1376.3 457.5 Z" fill="#b5bdbf"/>
<path d="M747.5 437.5 Q752 448 753 455.500 Q755 468 753.800 485.500 Q753.500 494 754.3 502.0" stroke="#2f3638" stroke-width="0.8" fill="none" opacity="0.8"/>
<g clip-path="url(#cFl)"><path d="M881.3 560 L1242.5 560 L1242.5 640 L881.3 640 Z" fill="#4a595e" opacity="0.0"/></g>
<path d="M881.3 579 Q900 590 910.8 589.5 L918.0 590.5 Q1000 607 1039.5 605.0 L1048.8 604.5 Q1120 603 1173.0 595.0 L1180.0 593.8 Q1215 586 1242.5 577 L1242.5 596 L1180.0 613.8 L1173.0 615.0 L1048.8 625.5 L1039.5 625.5 L918.0 611.3 L910.8 608.8 L881.3 598 Z" fill="#4a595e" opacity="0.28"/>
<path d="M747.5 437.5 L793.8 387.5 L799.5 383.0 L886.8 344.5 L893.8 342.0 L1007.5 322.5 L1016.3 321.8 L1137.5 324.5 L1145.0 325.5 L1254.5 348.8 L1261.3 352.0 L1340.0 393.0 L1343.8 395.5 L1377.5 451.3 L1377.5 472.5 Q1366 493 1360.8 510.0 L1360.8 528.8 L1291.3 578.8 L1285.0 582.5 L1180.0 613.8 L1173.0 615.0 L1048.8 625.5 L1039.5 625.5 L918.0 611.3 L910.8 608.8 L814.5 573.8 L808.8 571.3 L754.3 520.0 L751.3 517.0 L751.3 500.0 L751.4 496.5 Q751.8 490 753.8 485.5 Q752 472 746.8 460 Z" stroke="#2f3638" stroke-width="0.8" fill="none" stroke-linejoin="round"/>
<path d="M747.5 437.5 L747.5 459.0" stroke="#2f3638" stroke-width="0.8" fill="none"/>
<path d="M793.8 387.5 L793.8 408.8 M799.5 383.0 L799.5 403.3" stroke="#2f3638" stroke-width="0.8" fill="none" opacity="0.9"/>
<path d="M886.8 344.5 L886.8 363.8 M893.8 342.0 L893.8 362.5" stroke="#2f3638" stroke-width="0.8" fill="none" opacity="0.9"/>
<path d="M1007.5 322.5 L1007.5 342.0 M1016.3 321.8 L1016.3 341.5" stroke="#2f3638" stroke-width="0.8" fill="none" opacity="0.9"/>
<path d="M1137.5 324.5 L1137.5 343.8 M1145.0 325.5 L1145.0 345.0" stroke="#2f3638" stroke-width="0.8" fill="none" opacity="0.9"/>
<path d="M1254.5 348.8 L1254.5 368.3 M1261.3 352.0 L1261.3 370.0" stroke="#2f3638" stroke-width="0.8" fill="none" opacity="0.9"/>
<path d="M1340.0 393.0 L1340.0 412.5 M1343.8 395.5 L1343.8 415.0" stroke="#2f3638" stroke-width="0.8" fill="none" opacity="0.9"/>
<path d="M1377.5 451.3 L1377.5 472.5" stroke="#2f3638" stroke-width="0.8" fill="none"/>
<path d="M1360.8 510.0 L1360.8 528.8 M1358.0 510.8 L1358.0 530.0" stroke="#2f3638" stroke-width="0.8" fill="none" opacity="0.9"/>
<path d="M1291.3 560.8 L1291.3 578.8 M1285.0 562.5 L1285.0 582.5" stroke="#2f3638" stroke-width="0.8" fill="none" opacity="0.9"/>
<path d="M1180.0 593.8 L1180.0 613.8 M1173.0 595.0 L1173.0 615.0" stroke="#2f3638" stroke-width="0.8" fill="none" opacity="0.9"/>
<path d="M1048.8 604.5 L1048.8 625.5 M1039.5 605.0 L1039.5 625.5" stroke="#2f3638" stroke-width="0.8" fill="none" opacity="0.9"/>
<path d="M918.0 590.5 L918.0 611.3 M910.8 589.5 L910.8 608.8" stroke="#2f3638" stroke-width="0.8" fill="none" opacity="0.9"/>
<path d="M814.5 553.8 L814.5 573.8 M808.8 551.3 L808.8 571.3" stroke="#2f3638" stroke-width="0.8" fill="none" opacity="0.9"/>
<path d="M754.3 502.0 L754.3 520.0 M751.3 500.0 L751.3 517.0" stroke="#2f3638" stroke-width="0.8" fill="none" opacity="0.9"/>
<ellipse cx="1060" cy="420.5" rx="159" ry="70.5" stroke="#2f3638" stroke-width="0.8" fill="none" opacity="0.85"/>
<ellipse cx="1061" cy="521" rx="204" ry="91" stroke="#2f3638" stroke-width="0.8" fill="none" opacity="0.6"/>
<ellipse cx="1061.5" cy="550" rx="181" ry="79" stroke="#2f3638" stroke-width="0.8" fill="none" opacity="0.6"/>
<path d="M1005 518.8 A56 25 0 0 0 1117.5 518.8 L1117.5 578 A56 25 0 0 0 1005 578 Z" fill="url(#mHole)" opacity="0.85"/>
<ellipse cx="1061.3" cy="518.8" rx="56" ry="25" fill="#7c888c" fill-opacity="0.12" stroke="#2f3638" stroke-width="0.8" stroke-opacity="0.5"/>
<ellipse cx="1061.3" cy="578" rx="56" ry="25" fill="#c4ccce" fill-opacity="0.7" stroke="#2f3638" stroke-width="0.8" stroke-opacity="0.5"/>
<path d="M972.5 394.5 L1065.5 373.3 L1066.3 451.3 L971.3 472.0 Z" fill="#56656a" opacity="0.05"/>
<path d="M1065.5 373.3 L1153.8 397.5 L1153.8 475.0 L1066.3 451.3 Z" fill="#4a595e" opacity="0.16"/>
<path d="M1153.8 397.5 L1150.0 445.0 L1150.0 522.5 L1153.8 475.0 Z" fill="#4a595e" opacity="0.16"/>
<path d="M1150.0 445.0 L1055.5 466.3 L1055.5 543.8 L1150.0 522.5 Z" fill="#56656a" opacity="0.06"/>
<path d="M1055.5 466.3 L967.0 442.0 L968.0 518.8 L1055.5 543.8 Z" fill="#56656a" opacity="0.06"/>
<path d="M967.0 442.0 L972.5 394.5 L971.3 472.0 L968.0 518.8 Z" fill="#4a595e" opacity="0.14"/>
<path d="M971.3 472.0 L1066.3 451.3 L1153.8 475.0 L1150.0 522.5 L1055.5 543.8 L968.0 518.8 Z" fill="#4a595e" opacity="0.05"/>
<path d="M972.5 394.5 L1065.5 373.3 L1153.8 397.5 L1150.0 445.0 L1055.5 466.3 L967.0 442.0 Z" stroke="#2f3638" stroke-width="0.8" fill="none"/>
<path d="M971.3 472.0 L1066.3 451.3 L1153.8 475.0 L1150.0 522.5 L1055.5 543.8 L968.0 518.8 Z" stroke="#2f3638" stroke-width="0.8" fill="none" opacity="0.7"/>
<path d="M972.5 394.5 L971.3 472.0" stroke="#2f3638" stroke-width="0.8" fill="none" opacity="0.75"/>
<path d="M1065.5 373.3 L1066.3 451.3" stroke="#2f3638" stroke-width="0.8" fill="none" opacity="0.75"/>
<path d="M1153.8 397.5 L1153.8 475.0" stroke="#2f3638" stroke-width="0.8" fill="none" opacity="0.75"/>
<path d="M1150.0 445.0 L1150.0 522.5" stroke="#2f3638" stroke-width="0.8" fill="none" opacity="0.75"/>
<path d="M1055.5 466.3 L1055.5 543.8" stroke="#2f3638" stroke-width="0.8" fill="none" opacity="0.75"/>
<path d="M967.0 442.0 L968.0 518.8" stroke="#2f3638" stroke-width="0.8" fill="none" opacity="0.75"/>
<ellipse cx="1061" cy="498" rx="90.6" ry="40" fill="#4a595e" fill-opacity="0.05" stroke="#2f3638" stroke-width="0.8" stroke-opacity="0.55"/>
<ellipse cx="1061" cy="500.5" rx="88" ry="38" stroke="#2f3638" stroke-width="0.8" fill="none" opacity="0.4"/>
<path d="M1010 588 L1048.800 604.500 L1062.500 611 L1100 594" stroke="#2f3638" stroke-width="0.8" fill="none" opacity="0.5"/>
<path d="M1039.500 581 Q1071 577 1103 581 M1039.500 581 Q1071 590 1103 581" stroke="#2f3638" stroke-width="0.8" fill="none" opacity="0.35"/>
<path d="M896.3 630 L897.0999999999999 735" stroke="#2f3638" stroke-width="0.8" fill="none" opacity="0.6"/>
<path d="M932.5 607 L933.3 705" stroke="#2f3638" stroke-width="0.8" fill="none" opacity="0.6"/>
<path d="M953.8 597 L954.5999999999999 697" stroke="#2f3638" stroke-width="0.8" fill="none" opacity="0.6"/>
<path d="M1011.3 600 L1012.0999999999999 682" stroke="#2f3638" stroke-width="0.8" fill="none" opacity="0.6"/>
<path d="M1039.5 581 L1040.3 679" stroke="#2f3638" stroke-width="0.8" fill="none" opacity="0.6"/>
<path d="M1103.8 581 L1104.6 680" stroke="#2f3638" stroke-width="0.8" fill="none" opacity="0.6"/>
<path d="M1130.8 586 L1131.6 684" stroke="#2f3638" stroke-width="0.8" fill="none" opacity="0.6"/>
<path d="M1185.5 600 L1186.3 700" stroke="#2f3638" stroke-width="0.8" fill="none" opacity="0.6"/>
<path d="M1204.5 612 L1205.3 712" stroke="#2f3638" stroke-width="0.8" fill="none" opacity="0.6"/>
<path d="M1233.8 635 L1234.6 745" stroke="#2f3638" stroke-width="0.8" fill="none" opacity="0.6"/>
<path d="M896.300 735 Q915 728 932.500 705 Q945 702 953.800 697 Q985 690 1011.300 682 L1039.500 679 Q1072 688 1103.800 680 L1130.800 684 Q1160 690 1185.500 700 Q1196 704 1204.500 712 Q1222 728 1233.800 745" stroke="#2f3638" stroke-width="0.8" fill="none" opacity="0.6"/>
<path d="M932.500 607 L953.800 597 L953.800 697 L932.500 705 Z" fill="#3c4b50" opacity="0.04"/>
<path d="M896.300 630 L932.500 607 L932.500 705 L896.300 735 Z" fill="#3c4b50" opacity="0.07"/>
<path d="M1185.500 600 L1204.500 612 L1204.500 712 L1185.500 700 Z" fill="#3c4b50" opacity="0.04"/>
<path d="M1204.500 612 L1233.800 635 L1233.800 745 L1204.500 712 Z" fill="#3c4b50" opacity="0.07"/>
<path d="M884 643 Q896 660 884 672 Q880 658 884 643 Z" fill="#3c4b50" fill-opacity="0.15" stroke="#2f3638" stroke-width="0.7" stroke-opacity="0.5"/>
<path d="M1241 650 Q1228 665 1238 680 Q1245 664 1241 650 Z" fill="#3c4b50" fill-opacity="0.15" stroke="#2f3638" stroke-width="0.7" stroke-opacity="0.5"/>
<path d="M889 688 Q912 700 918 712 Q900 706 889 688 Z M889 688 L891 760" fill="#3c4b50" fill-opacity="0.2" stroke="#2f3638" stroke-width="0.7" stroke-opacity="0.55"/>
<path d="M1229 693 Q1206 705 1195 718 Q1215 712 1229 693 Z M1229 693 L1230 770" fill="#3c4b50" fill-opacity="0.2" stroke="#2f3638" stroke-width="0.7" stroke-opacity="0.55"/>
<path d="M881.3 557 L881.3 700 L884.5 778 Q886 792 906.5 797 M1242.5 550 L1241.5 700 L1239 786 Q1238 796 1220 799" stroke="#2f3638" stroke-width="0.8" fill="none" opacity="0.8"/>
<clipPath id="cLow"><path d="M850 980 L850 800 L906.5 800 L906.5 760 L897 735 Q915 728 932.5 705 Q945 702 953.8 697 Q985 690 1011.3 682 L1039.5 679 Q1072 688 1103.8 680 L1130.8 684 Q1160 690 1185.5 700 Q1196 704 1204.5 712 Q1222 728 1233.8 745 L1220 768 L1220 802 L1280 802 L1280 980 Z"/></clipPath>
<path d="M937 723.3 Q970 724 992.4 740 L993 839 L938 823 Z" fill="#4a595e" fill-opacity="0.10" stroke="#2f3638" stroke-width="0.8" stroke-opacity="0.6"/>
<path d="M937 723.3 Q970 724 992.4 740 Q960 737 937 723.3 Z" fill="#4a595e" fill-opacity="0.25" stroke="#2f3638" stroke-width="0.6" stroke-opacity="0.5"/>
<path d="M1019.7 744 L1085.7 744 L1086 839 L1020.9 842.7 Z" fill="#4a595e" fill-opacity="0.07" stroke="#2f3638" stroke-width="0.8" stroke-opacity="0.6"/>
<path d="M1019.7 744 Q1052 737 1085.7 744 Q1052 749 1019.7 744 Z" fill="#4a595e" fill-opacity="0.35" stroke="#2f3638" stroke-width="0.6" stroke-opacity="0.5"/>
<path d="M1114 740 Q1140 727 1172.4 727.3 L1172.4 825 L1114 842.7 Z" fill="#4a595e" fill-opacity="0.10" stroke="#2f3638" stroke-width="0.8" stroke-opacity="0.6"/>
<path d="M1114 740 Q1140 727 1172.4 727.3 Q1148 737 1114 740 Z" fill="#4a595e" fill-opacity="0.25" stroke="#2f3638" stroke-width="0.6" stroke-opacity="0.5"/>
<path d="M1194.6 718 L1194.6 813.6 M1229.6 695 L1229.6 792 M918.3 713 L918.3 811 M912.5 740 L930 751.8 L930 758.8 L913.6 764.6 Z" stroke="#2f3638" stroke-width="0.8" fill="none" opacity="0.5"/>
<g clip-path="url(#cLow)">
<path d="M911.5 718 A156.5 69 0 1 0 1215.5 718 Q1209.5 725 1199.5 719 A139 61 0 1 1 927.5 719 Q917.5 725 911.5 718 Z" fill="#4a595e" opacity="0.1"/>
<path d="M907.0 729 A156.5 69 0 0 0 1220.0 729" stroke="#2f3638" stroke-width="0.8" fill="none" opacity="0.45" />
<path d="M907.0 734 A156.5 69 0 0 0 1220.0 734" stroke="#2f3638" stroke-width="0.8" fill="none" opacity="0.45" />
<path d="M907.0 729 A156.5 69 0 0 1 1220.0 729" stroke="#2f3638" stroke-width="0.8" fill="none" opacity="0.38" />
<ellipse cx="1063.5" cy="732" rx="139" ry="61" stroke="#2f3638" stroke-width="0.8" fill="none" opacity="0.4" />
</g>
<g clip-path="url(#cLow)">
<path d="M911.5 747 A156.5 69 0 1 0 1215.5 747 Q1209.5 754 1199.5 748 A139 61 0 1 1 927.5 748 Q917.5 754 911.5 747 Z" fill="#4a595e" opacity="0.1"/>
<path d="M907.0 758 A156.5 69 0 0 0 1220.0 758" stroke="#2f3638" stroke-width="0.8" fill="none" opacity="0.45" />
<path d="M907.0 763 A156.5 69 0 0 0 1220.0 763" stroke="#2f3638" stroke-width="0.8" fill="none" opacity="0.45" />
<path d="M907.0 758 A156.5 69 0 0 1 1220.0 758" stroke="#2f3638" stroke-width="0.8" fill="none" opacity="0.38" />
<ellipse cx="1063.5" cy="761" rx="139" ry="61" stroke="#2f3638" stroke-width="0.8" fill="none" opacity="0.4" />
</g>
<g clip-path="url(#cLow)">
<path d="M911.5 776 A156.5 69 0 1 0 1215.5 776 Q1209.5 783 1199.5 777 A139 61 0 1 1 927.5 777 Q917.5 783 911.5 776 Z" fill="#4a595e" opacity="0.22"/>
<path d="M907.0 787 A156.5 69 0 0 0 1220.0 787" stroke="#2f3638" stroke-width="0.8" fill="none" opacity="0.8" />
<path d="M907.0 792 A156.5 69 0 0 0 1220.0 792" stroke="#2f3638" stroke-width="0.8" fill="none" opacity="0.8" />
<path d="M907.0 787 A156.5 69 0 0 1 1220.0 787" stroke="#2f3638" stroke-width="0.8" fill="none" opacity="0.38" />
<ellipse cx="1063.5" cy="790" rx="139" ry="61" stroke="#2f3638" stroke-width="0.8" fill="none" opacity="0.4" />
</g>
<g clip-path="url(#cLow)">
<path d="M911.5 805 A156.5 69 0 1 0 1215.5 805 Q1209.5 812 1199.5 806 A139 61 0 1 1 927.5 806 Q917.5 812 911.5 805 Z" fill="#4a595e" opacity="0.22"/>
<path d="M907.0 816 A156.5 69 0 0 0 1220.0 816" stroke="#2f3638" stroke-width="0.8" fill="none" opacity="0.8" />
<path d="M907.0 821 A156.5 69 0 0 0 1220.0 821" stroke="#2f3638" stroke-width="0.8" fill="none" opacity="0.8" />
<path d="M907.0 816 A156.5 69 0 0 1 1220.0 816" stroke="#2f3638" stroke-width="0.8" fill="none" opacity="0.38" />
<ellipse cx="1063.5" cy="819" rx="139" ry="61" stroke="#2f3638" stroke-width="0.8" fill="none" opacity="0.4" />
</g>
<g clip-path="url(#cLow)">
<path d="M911.5 833 A156.5 69 0 1 0 1215.5 833 Q1209.5 840 1199.5 834 A139 61 0 1 1 927.5 834 Q917.5 840 911.5 833 Z" fill="#4a595e" opacity="0.22"/>
<path d="M907.0 844 A156.5 69 0 0 0 1220.0 844" stroke="#2f3638" stroke-width="0.8" fill="none" opacity="0.8" />
<path d="M907.0 849 A156.5 69 0 0 0 1220.0 849" stroke="#2f3638" stroke-width="0.8" fill="none" opacity="0.8" />
<path d="M907.0 844 A156.5 69 0 0 1 1220.0 844" stroke="#2f3638" stroke-width="0.8" fill="none" opacity="0.38" />
<ellipse cx="1063.5" cy="847" rx="139" ry="61" stroke="#2f3638" stroke-width="0.8" fill="none" opacity="0.4" />
</g>
<g clip-path="url(#cLow)">
<path d="M911.5 862 A156.5 69 0 1 0 1215.5 862 Q1209.5 869 1199.5 863 A139 61 0 1 1 927.5 863 Q917.5 869 911.5 862 Z" fill="#4a595e" opacity="0.22"/>
<path d="M907.0 873 A156.5 69 0 0 0 1220.0 873" stroke="#2f3638" stroke-width="0.8" fill="none" opacity="0.8" />
<path d="M907.0 878 A156.5 69 0 0 0 1220.0 878" stroke="#2f3638" stroke-width="0.8" fill="none" opacity="0.8" />
<path d="M907.0 873 A156.5 69 0 0 1 1220.0 873" stroke="#2f3638" stroke-width="0.8" fill="none" opacity="0.38" />
<ellipse cx="1063.5" cy="876" rx="139" ry="61" stroke="#2f3638" stroke-width="0.8" fill="none" opacity="0.4" />
</g>
<path d="M907.0 892 A156.5 69 0 0 0 1220.0 892" stroke="#2f3638" stroke-width="0.8" fill="none" opacity="0.85" />
<path d="M907.0 892 A156.5 69 0 0 1 1220.0 892" stroke="#2f3638" stroke-width="0.8" fill="none" opacity="0.3" />
<path d="M915.5 886 A148 65 0 0 0 1211.5 886" stroke="#2f3638" stroke-width="0.8" fill="none" opacity="0.5" />
<ellipse cx="1063.5" cy="884" rx="128" ry="56" stroke="#2f3638" stroke-width="0.8" fill="none" opacity="0.35" />
<path d="M906.8 797 L907 892 M1220 799 L1220 892" stroke="#2f3638" stroke-width="0.8" fill="none" opacity="0.7"/>
<path d="M1058 821 h9 M1062.500 816.500 v9" stroke="#b06a6a" stroke-width="1.200" fill="none"/>
<path d="M1062.500 826 L1062.500 880 M1066 820 L1125 803 M1070 826 L1092 848 M1082 813 L1082 865 L1062.500 845 M1104 806 L1105 862" stroke="#e6e2e2" stroke-width="0.8" fill="none" opacity="0.8"/>
<path d="M1059.800 880 h5.400 l-2.700 8.500 z M1120 803 l9 -1.500 l-8 4.500 z M1089 845 l6.500 7.500 l-8.500 -4 z" fill="#f4f2f2"/>
<path d="M1059 894 h6 l-6 7 h6" stroke="#e4dede" stroke-width="0.7" fill="none" opacity="0.8"/>
</svg>
<svg style="left:480px;top:860px" width="140" height="140" viewBox="480 860 140 140">
<defs><linearGradient id="tX" x1="0" x2="0" y1="0" y2="1"><stop offset="0" stop-color="#f06060"/><stop offset="1" stop-color="#a02020"/></linearGradient>
<linearGradient id="tY" x1="0" x2="1" y1="0" y2="0"><stop offset="0" stop-color="#2a8a2a"/><stop offset="1" stop-color="#40b040"/></linearGradient></defs>
<path d="M495.500 885L533 876L553 893L553 932L515.500 939.500L495.500 922Z" fill="#fff" stroke="#b4b4b4" stroke-width="1" stroke-linejoin="round"/>
<path d="M495.500 885L515.500 901.500L553 893M515.500 901.500V939.500" fill="none" stroke="#c4c4c4" stroke-width="1"/>
<path d="M553 899L574 894.500L573 892L589 893.500L575.500 901L575 898.500L553.500 903.500Z" fill="url(#tX)"/>
<path d="M521.500 938H527V957L529 957L524.300 973L519.700 957L521.500 957Z" fill="#0a28c8"/>
<path d="M532.500 915.500C534 913 536 914 537 915L549 925.500L553 927L557.500 937.500L546.500 934L544.500 931L532.500 919C531.500 918 531.500 916.500 532.500 915.500Z" fill="url(#tY)"/>
<g font-family="Liberation Sans, sans-serif" font-size="11.500">
<text x="593" y="894.500" fill="#d03040">X</text>
<text x="558" y="945" fill="#40a040">Y</text>
<text x="519.500" y="985" fill="#2040f0">Z</text></g>
</svg>
<div id="botline"></div>
</body>
</html>
